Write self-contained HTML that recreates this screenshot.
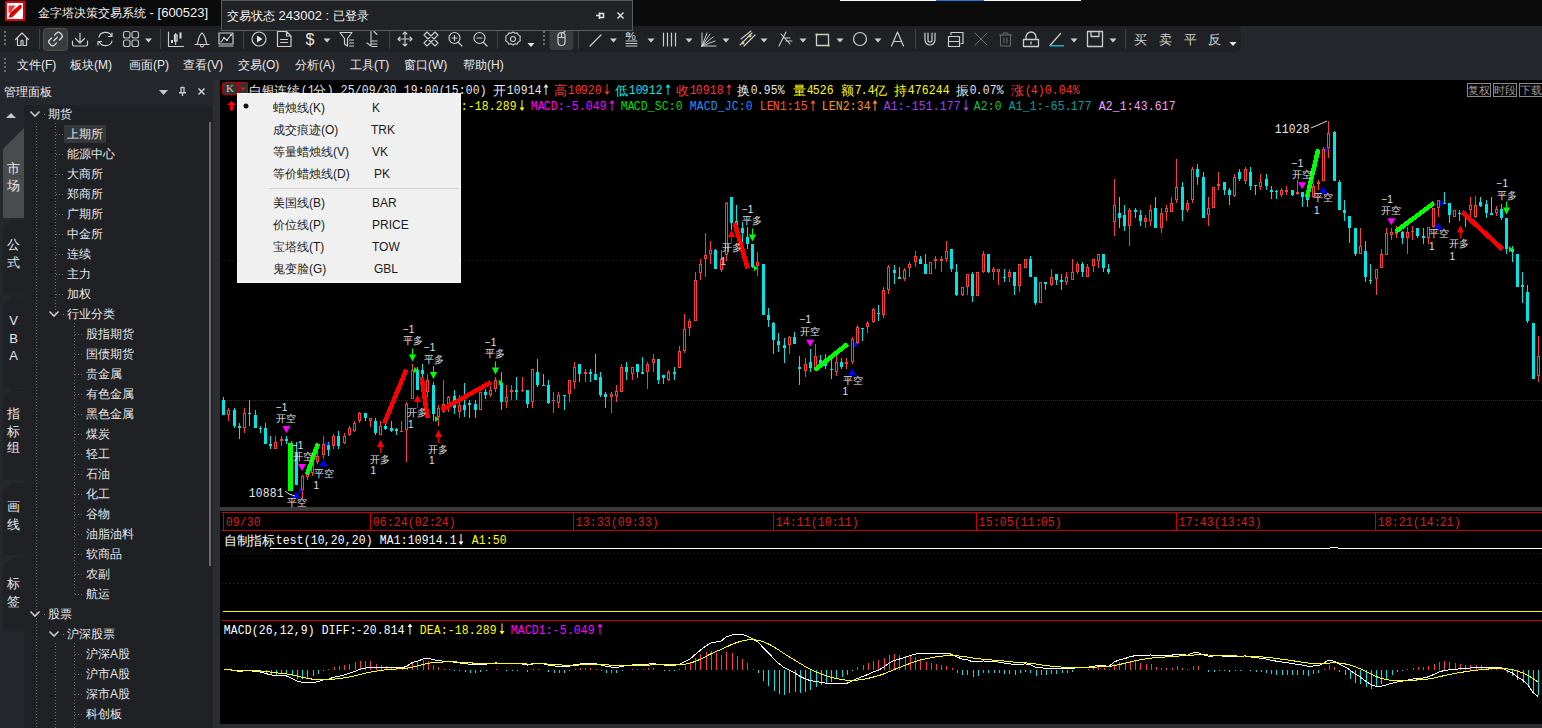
<!DOCTYPE html><html><head><meta charset="utf-8"><style>*{margin:0;padding:0;box-sizing:border-box}
html,body{width:1542px;height:728px;overflow:hidden;background:#24272b;font-family:"Liberation Sans",sans-serif;color:#e6e6e6;position:relative}
.abs{position:absolute}
#title{position:absolute;left:0;top:0;width:1542px;height:26px;background:#0b0b0c}
#ttext{position:absolute;left:38px;top:5px;font-size:12.35px;color:#f2f2f2;white-space:nowrap;letter-spacing:0px}
#status{position:absolute;left:221px;top:0;width:412px;height:31px;background:#212327;border:1px solid #5a5c60;border-top-color:#55575b}
#stext{position:absolute;left:5px;top:7px;font-size:12.35px;color:#f0f0f0;white-space:nowrap}
#toolbar{position:absolute;left:0;top:26px;width:1241px;height:25.5px;background:#1f2124;border-radius:0 0 5px 0}
#menubar{position:absolute;left:0;top:52px;width:1542px;height:28px;background:#24272b}
.mi{position:absolute;top:5px;font-size:12px;color:#e8e8e8;white-space:nowrap}
#left{position:absolute;left:0;top:80px;width:213px;height:648px;background:#24272b}
#ptitle{position:absolute;left:4px;top:3.5px;font-size:12px;color:#eaeaea}
#tabs{position:absolute;left:0;top:25px;width:24px;height:623px}
#tree{position:absolute;left:24px;top:25px;width:188px;height:623px;background:#1f2124;border-left:1px solid #303236}
.tn{position:absolute;font-size:12px;color:#e8e8e8;white-space:nowrap;line-height:16px}
.tab{position:absolute;left:6.5px;width:14px;font-size:13px;color:#e6e6e6;line-height:16px;text-align:center}
#chart{position:absolute;left:220px;top:80px;width:1322px;height:644px;background:#000}
.mt{position:absolute;left:0;height:0;white-space:nowrap}
.mt span{position:absolute;top:-6px;line-height:16px}
.mt .as{font-family:"Liberation Mono",monospace;font-size:13.5px;transform:scaleX(.84);transform-origin:4px 50%}
.mt .cj{font-size:13px}
.lb{position:absolute;white-space:nowrap;color:#e0e0e0;line-height:14px}
#popup{position:absolute;left:237px;top:93px;width:224px;height:190px;background:#f0f0f0;border:1px solid #f6f6f6}
.pm{position:absolute;left:35px;font-size:12px;color:#1a1a1a;white-space:nowrap;line-height:16px}
.ps{position:absolute;left:134px;font-size:12px;color:#1a1a1a;white-space:nowrap;line-height:16px}
</style></head><body><div id="title">
 <svg class="abs" style="left:0;top:0" width="30" height="26">
  <rect x="5" y="1" width="20" height="20" fill="#e60000"/>
  <rect x="7" y="3" width="16" height="16" fill="#ffffff"/>
  <path d="M8.5 5.5h7l-5 7h-2z" fill="#e84040"/>
  <path d="M8.5 17.5l2 -5 9 -7.5 2 0 0 3 -9.5 9.5z" fill="#e00000"/>
 </svg>
 <div id="ttext">金字塔决策交易系统<span style="font-size:13px"> - [600523]</span></div>
 <div class="abs" style="left:840px;top:0;width:241px;height:1px;background:#f4f4f4"></div>
 <div class="abs" style="left:936px;top:0;width:48px;height:1px;background:#1e7ad0"></div>
</div>
<div id="toolbar"></div>
<div id="menubar">
 <svg class="abs" style="left:0;top:0" width="12" height="28"><g fill="#6a6a6a"><rect x="4" y="6" width="2" height="2"/><rect x="4" y="10" width="2" height="2"/><rect x="4" y="14" width="2" height="2"/><rect x="4" y="18" width="2" height="2"/></g></svg>
 <div class="mi" style="left:17px">文件(F)</div>
 <div class="mi" style="left:70px">板块(M)</div>
 <div class="mi" style="left:129px">画面(P)</div>
 <div class="mi" style="left:183px">查看(V)</div>
 <div class="mi" style="left:238px">交易(O)</div>
 <div class="mi" style="left:295px">分析(A)</div>
 <div class="mi" style="left:350px">工具(T)</div>
 <div class="mi" style="left:404px">窗口(W)</div>
 <div class="mi" style="left:463px">帮助(H)</div>
</div>
<svg class="abs" style="left:0;top:0" width="1250" height="56"><rect x="4" y="31" width="2" height="2" fill="#6e6e6e"/><rect x="4" y="35" width="2" height="2" fill="#6e6e6e"/><rect x="4" y="39" width="2" height="2" fill="#6e6e6e"/><rect x="4" y="43" width="2" height="2" fill="#6e6e6e"/><path d="M15.5 39.5L22 33l6.5 6.5M17.5 38v7.5h3.5v-4.5a1 1 0 0 1 2 0v4.5h3.5V38" stroke="#cdcdcd" stroke-width="1.2" fill="none" stroke-linecap="round" stroke-linejoin="round"/><path d="M39.5 29V49" stroke="#3e4044" stroke-width="1"/><path d="M160.5 29V49" stroke="#3e4044" stroke-width="1"/><path d="M243.5 29V49" stroke="#3e4044" stroke-width="1"/><path d="M389.5 29V49" stroke="#3e4044" stroke-width="1"/><path d="M497.5 29V49" stroke="#3e4044" stroke-width="1"/><path d="M578.5 29V49" stroke="#3e4044" stroke-width="1"/><path d="M915.5 29V49" stroke="#3e4044" stroke-width="1"/><path d="M1125.5 29V49" stroke="#3e4044" stroke-width="1"/><rect x="43.5" y="28.5" width="24" height="22" rx="3" fill="#3b3c3e" stroke="#505154"/><g transform="rotate(-45 55.5 39)" stroke="#d6d6d6" stroke-width="1.3" fill="none" stroke-linecap="round"><path d="M57.5 35.5h3a2.5 2.5 0 0 1 2.5 2.5v2a2.5 2.5 0 0 1 -2.5 2.5h-3M53.5 35.5h-3a2.5 2.5 0 0 0 -2.5 2.5v2a2.5 2.5 0 0 0 2.5 2.5h3M53 39h5"/></g><path d="M80 33v10M75.5 38.5L80 43l4.5 -4.5M72.5 41v3.5a1.5 1.5 0 0 0 1.5 1.5h12a1.5 1.5 0 0 0 1.5 -1.5V41" stroke="#cdcdcd" stroke-width="1.2" fill="none" stroke-linecap="round" stroke-linejoin="round"/><path d="M99 37a6.5 5.5 0 0 1 12.5 -1M112 33v3.5h-3.5M112 41a6.5 5.5 0 0 1 -12.5 1M98 45v-3.5h3.5" stroke="#cdcdcd" stroke-width="1.2" fill="none" stroke-linecap="round" stroke-linejoin="round"/><rect x="123.5" y="31.5" width="6.5" height="6.5" rx="2" stroke="#bdbdbd" stroke-width="1.2" fill="none"/><rect x="132" y="31.5" width="6.5" height="6.5" rx="2" stroke="#bdbdbd" stroke-width="1.2" fill="none"/><rect x="123.5" y="40" width="6.5" height="6.5" rx="2" stroke="#bdbdbd" stroke-width="1.2" fill="none"/><rect x="132" y="40" width="6.5" height="6.5" rx="2" stroke="#bdbdbd" stroke-width="1.2" fill="none"/><path d="M145.0 38.5h7l-3.5 4z" fill="#cfcfcf"/><path d="M168.5 32v14.5h15" stroke="#cdcdcd" stroke-width="1.2" fill="none" stroke-linecap="round" stroke-linejoin="round"/><rect x="171" y="40" width="2" height="3" fill="#ddd"/><rect x="174.5" y="35" width="2.5" height="6" fill="none" stroke="#ddd" stroke-width="1.2"/><path d="M175.7 33v12" stroke="#ddd"/><rect x="179.5" y="32.5" width="2" height="6" fill="#ddd"/><path d="M195 44.5h14M197 44.5c1.5 -2 1 -9 5 -11.5c4 2.5 3.5 9.5 5 11.5M200.5 45.5a1.5 1.5 0 0 0 3 0" stroke="#cdcdcd" stroke-width="1.2" fill="none" stroke-linecap="round" stroke-linejoin="round"/><path d="M219 33h14v11h-14zM219 46h14M221 42l3 -4 3 2 4 -5" stroke="#cdcdcd" stroke-width="1.2" fill="none" stroke-linecap="round" stroke-linejoin="round"/><circle cx="224" cy="38" r="1" fill="#ddd"/><circle cx="227" cy="40" r="1" fill="#ddd"/><circle cx="231" cy="35" r="1" fill="#ddd"/><path d="M259 32a7 7 0 1 1 0 14a7 7 0 1 1 0 -14z" stroke="#cdcdcd" stroke-width="1.2" fill="none" stroke-linecap="round" stroke-linejoin="round"/><path d="M257 35.5v7l5.5 -3.5z" fill="#e6e6e6"/><path d="M277.5 31.5h9l4.5 4.5v10.5h-13.5zM286.5 31.5v4.5h4.5M280.5 39.5h7M280.5 42.5h7" stroke="#cdcdcd" stroke-width="1.2" fill="none" stroke-linecap="round" stroke-linejoin="round"/><text x="305.5" y="45" font-size="16" font-family="Liberation Sans" fill="#e6e6e6">$</text><path d="M323.5 38.5h7l-3.5 4z" fill="#cfcfcf"/><path d="M340 32.5h12l-4.5 6v7.5l-3 -2v-5.5zM349.5 40h4M349.5 43h4M349.5 46h4" stroke="#cdcdcd" stroke-width="1.2" fill="none" stroke-linecap="round" stroke-linejoin="round"/><path d="M371 31.5v14.5l-4 -3M374 31.5l3 3M372 41h5M372 44h5M372 46.5h5" stroke="#cdcdcd" stroke-width="1.1" fill="none" stroke-linecap="round" stroke-linejoin="round"/><path d="M405 32v14M398 39h14M403 34l2 -2 2 2M403 44l2 2 2 -2M400 37l-2 2 2 2M410 37l2 2 -2 2" stroke="#cdcdcd" stroke-width="1.1" fill="none" stroke-linecap="round" stroke-linejoin="round"/><path d="M424 35l3 -3 11 11 -3 3zM427 46l-3 -3 11 -11 3 3z" stroke="#cdcdcd" stroke-width="1.1" fill="none" stroke-linecap="round" stroke-linejoin="round"/><path d="M454.5 32.5a5.5 5.5 0 1 1 0 11a5.5 5.5 0 1 1 0 -11zM458.5 42.5l3.5 3.5M452 38h5M454.5 35.5v5" stroke="#cdcdcd" stroke-width="1.2" fill="none" stroke-linecap="round" stroke-linejoin="round"/><path d="M479.5 32.5a5.5 5.5 0 1 1 0 11a5.5 5.5 0 1 1 0 -11zM483.5 42.5l3.5 3.5M477 38h5" stroke="#cdcdcd" stroke-width="1.2" fill="none" stroke-linecap="round" stroke-linejoin="round"/><path d="M513 32l2 1.2 2.3 -0.3 1 2 2 1.3 -0.3 2.3 0.3 2.3 -2 1.3 -1 2 -2.3 -0.3 -2 1.2 -2 -1.2 -2.3 0.3 -1 -2 -2 -1.3 0.3 -2.3 -0.3 -2.3 2 -1.3 1 -2 2.3 0.3z" stroke="#cdcdcd" stroke-width="1.1" fill="none" stroke-linecap="round" stroke-linejoin="round"/><path d="M513 36.5a2.5 2.5 0 1 1 0 5a2.5 2.5 0 1 1 0 -5z" stroke="#cdcdcd" stroke-width="1.1" fill="none" stroke-linecap="round" stroke-linejoin="round"/><path d="M527.5 43h7l-3.5 4z" fill="#e6e6e6"/><rect x="543" y="31" width="2" height="2" fill="#6e6e6e"/><rect x="543" y="35" width="2" height="2" fill="#6e6e6e"/><rect x="543" y="39" width="2" height="2" fill="#6e6e6e"/><rect x="543" y="43" width="2" height="2" fill="#6e6e6e"/><rect x="549.5" y="27" width="24" height="23" rx="3" fill="#3b3c3e"/><path d="M558 36a3.5 3.5 0 0 1 7 0v6a3.5 3.5 0 0 1 -7 0zM558.5 37.5h6M561.5 33v4.5M563 32.5l2 -1" stroke="#cdcdcd" stroke-width="1.2" fill="none" stroke-linecap="round" stroke-linejoin="round"/><path d="M590 46l11 -11" stroke="#cdcdcd" stroke-width="1.2" fill="none" stroke-linecap="round" stroke-linejoin="round"/><path d="M610.0 38.5h7l-3.5 4z" fill="#cfcfcf"/><text x="626" y="40" font-size="11" font-family="Liberation Sans" fill="#d8d8d8">%</text><path d="M626 41h11M626 43.5h11M626 46h11M626 34h4M626 36.5h4" stroke="#cdcdcd" stroke-width="1" fill="none" stroke-linecap="round" stroke-linejoin="round"/><path d="M647.5 38.5h7l-3.5 4z" fill="#cfcfcf"/><path d="M663.5 33v13M667.5 33v13M671.5 33v13M675.5 33v13" stroke="#cdcdcd" stroke-width="1.2" fill="none" stroke-linecap="round" stroke-linejoin="round"/><path d="M685.5 38.5h7l-3.5 4z" fill="#cfcfcf"/><path d="M702 46h14M702 46l13 -5M702 46l11 -9M702 46l8 -12M702 46l5 -13M702 46v-13" stroke="#cdcdcd" stroke-width="1" fill="none" stroke-linecap="round" stroke-linejoin="round"/><path d="M722.5 38.5h7l-3.5 4z" fill="#cfcfcf"/><path d="M740 45l12 -12M744 46l11 -11M741 39l10 -8" stroke="#cdcdcd" stroke-width="1.1" fill="none" stroke-linecap="round" stroke-linejoin="round"/><circle cx="743" cy="43" r="1.4" fill="#d6d66a"/><circle cx="750" cy="36" r="1.4" fill="#d6d66a"/><path d="M760.5 38.5h7l-3.5 4z" fill="#cfcfcf"/><path d="M779 46l7 -14M781 34l9 10M784 38h6M786 41h6" stroke="#cdcdcd" stroke-width="1.1" fill="none" stroke-linecap="round" stroke-linejoin="round"/><path d="M799.5 38.5h7l-3.5 4z" fill="#cfcfcf"/><path d="M816.5 34.5h12v11h-12z" stroke="#cdcdcd" stroke-width="1.3" fill="none" stroke-linecap="round" stroke-linejoin="round"/><rect x="815.5" y="33.5" width="2" height="2" fill="#d6d66a"/><rect x="827.5" y="44.5" width="2" height="2" fill="#d6d66a"/><path d="M836.5 38.5h7l-3.5 4z" fill="#cfcfcf"/><path d="M860 32.5a6.5 6.5 0 1 1 0 13a6.5 6.5 0 1 1 0 -13z" stroke="#cdcdcd" stroke-width="1.2" fill="none" stroke-linecap="round" stroke-linejoin="round"/><path d="M874.5 38.5h7l-3.5 4z" fill="#cfcfcf"/><path d="M891.5 46l6 -14 6 14M893.5 41.5h8" stroke="#cdcdcd" stroke-width="1.2" fill="none" stroke-linecap="round" stroke-linejoin="round"/><path d="M925 33v7a5 5 0 0 0 10 0v-7M928 33v7a2 2 0 0 0 4 0v-7" stroke="#cdcdcd" stroke-width="1.2" fill="none" stroke-linecap="round" stroke-linejoin="round"/><path d="M951 34.5v-2h12v11h-2M948.5 36.5h11v10h-11zM948.5 41.5h11" stroke="#cdcdcd" stroke-width="1.2" fill="none" stroke-linecap="round" stroke-linejoin="round"/><path d="M975 33l12 12M987 33l-12 12" stroke="#707070" stroke-width="1" fill="none" stroke-linecap="round" stroke-linejoin="round"/><path d="M999 35h13M1003 35v-2h5v2M1000.5 35v11h10v-11M1004 38v5M1007 38v5" stroke="#6a6a6a" stroke-width="1" fill="none" stroke-linecap="round" stroke-linejoin="round"/><path d="M1023.5 39.5h15v7h-15zM1026 39.5v-2.5a5 5 0 0 1 10 0v2.5M1031 42v2" stroke="#cdcdcd" stroke-width="1.3" fill="none" stroke-linecap="round" stroke-linejoin="round"/><path d="M1050 45.5l10.5 -12" stroke="#cdcdcd" stroke-width="1.2" fill="none" stroke-linecap="round" stroke-linejoin="round"/><rect x="1050" y="45" width="14" height="1.5" fill="#1ab0c8"/><path d="M1070.5 38.5h7l-3.5 4z" fill="#cfcfcf"/><path d="M1087.5 31.5h15v15h-15zM1091 31.5v5h8v-5M1087.5 40.5" stroke="#cdcdcd" stroke-width="1.3" fill="none" stroke-linecap="round" stroke-linejoin="round"/><path d="M1109.5 38.5h7l-3.5 4z" fill="#cfcfcf"/></svg><div class="abs" style="left:1134px;top:31px;font-size:13px;color:#cfcfcf">买</div><div class="abs" style="left:1159px;top:31px;font-size:13px;color:#cfcfcf">卖</div><div class="abs" style="left:1184px;top:31px;font-size:13px;color:#cfcfcf">平</div><div class="abs" style="left:1208px;top:31px;font-size:13px;color:#cfcfcf">反</div><svg class="abs" style="left:1228px;top:40px" width="10" height="8"><path d="M1.5 2h7l-3.5 4z" fill="#e6e6e6"/></svg>
<div id="status"><div id="stext">交易状态<span style="font-size:13px"> 243002 : </span>已登录</div>
 <svg class="abs" style="left:370px;top:7px" width="40" height="16">
  <path d="M4 7.5h3.5M7.5 4.5v6.5" stroke="#e0e0e0" stroke-width="1.4" fill="none"/>
  <rect x="7.5" y="5.5" width="4" height="4" fill="none" stroke="#e0e0e0" stroke-width="1.5"/>
  <path d="M25.5 4.5l6 6M31.5 4.5l-6 6" stroke="#dcdcdc" stroke-width="1.5" fill="none"/>
 </svg>
</div>
<div id="left">
 <div id="ptitle">管理面板</div>
 <svg class="abs" style="left:150px;top:0" width="64" height="24">
  <path d="M9 10h9l-4.5 5z" fill="#c8c8c8"/>
  <path d="M31 7.5h3M31 7v5.5M34 7v5.5M29 12.75h7M32.5 12.5v3.5" stroke="#cfcfcf" stroke-width="1.3" fill="none"/>
  <path d="M48.5 8.5l6 6M54.5 8.5l-6 6" stroke="#d0d0d0" stroke-width="1.5" fill="none"/>
 </svg>
 <svg class="abs" style="left:0;top:0" width="213" height="648"><rect x="24" y="25" width="188" height="623" fill="#1f2124"/><path d="M6 38h10l-5 -5z" fill="#c8c8c8"/><path d="M3 148L11 140H24V215H6a3 3 0 0 1 -3 -3z" fill="#1f2124"/><path d="M3 225L11 217H24V308H6a3 3 0 0 1 -3 -3z" fill="#1f2124"/><path d="M3 317L11 309H24V400H6a3 3 0 0 1 -3 -3z" fill="#1f2124"/><path d="M3 411L11 403H24V475H6a3 3 0 0 1 -3 -3z" fill="#1f2124"/><path d="M3 486L11 478H24V551H6a3 3 0 0 1 -3 -3z" fill="#1f2124"/><path d="M3 69L24 48V138H3z" fill="#4a4b4d"/><path d="M36.5 43V648" stroke="#6a6a6a" stroke-width="1" stroke-dasharray="1 2"/><path d="M55.5 43V234" stroke="#6a6a6a" stroke-width="1" stroke-dasharray="1 2"/><path d="M74.5 243V514" stroke="#6a6a6a" stroke-width="1" stroke-dasharray="1 2"/><path d="M55.5 563V648" stroke="#6a6a6a" stroke-width="1" stroke-dasharray="1 2"/><path d="M74.5 563V648" stroke="#6a6a6a" stroke-width="1" stroke-dasharray="1 2"/><path d="M30.5 31.5l4.5 4.5l4.5 -4.5" stroke="#c8c8c8" stroke-width="1.6" fill="none"/><rect x="44" y="34" width="1" height="1" fill="#888"/><path d="M56 54.5H64" stroke="#6a6a6a" stroke-width="1" stroke-dasharray="1 2"/><rect x="64" y="45" width="42" height="18" fill="#35373a"/><path d="M56 74.5H64" stroke="#6a6a6a" stroke-width="1" stroke-dasharray="1 2"/><path d="M56 94.5H64" stroke="#6a6a6a" stroke-width="1" stroke-dasharray="1 2"/><path d="M56 114.5H64" stroke="#6a6a6a" stroke-width="1" stroke-dasharray="1 2"/><path d="M56 134.5H64" stroke="#6a6a6a" stroke-width="1" stroke-dasharray="1 2"/><path d="M56 154.5H64" stroke="#6a6a6a" stroke-width="1" stroke-dasharray="1 2"/><path d="M56 174.5H64" stroke="#6a6a6a" stroke-width="1" stroke-dasharray="1 2"/><path d="M56 194.5H64" stroke="#6a6a6a" stroke-width="1" stroke-dasharray="1 2"/><path d="M56 214.5H64" stroke="#6a6a6a" stroke-width="1" stroke-dasharray="1 2"/><path d="M49.5 231.5l4.5 4.5l4.5 -4.5" stroke="#c8c8c8" stroke-width="1.6" fill="none"/><rect x="63" y="234" width="1" height="1" fill="#888"/><path d="M75 254.5H83" stroke="#6a6a6a" stroke-width="1" stroke-dasharray="1 2"/><path d="M75 274.5H83" stroke="#6a6a6a" stroke-width="1" stroke-dasharray="1 2"/><path d="M75 294.5H83" stroke="#6a6a6a" stroke-width="1" stroke-dasharray="1 2"/><path d="M75 314.5H83" stroke="#6a6a6a" stroke-width="1" stroke-dasharray="1 2"/><path d="M75 334.5H83" stroke="#6a6a6a" stroke-width="1" stroke-dasharray="1 2"/><path d="M75 354.5H83" stroke="#6a6a6a" stroke-width="1" stroke-dasharray="1 2"/><path d="M75 374.5H83" stroke="#6a6a6a" stroke-width="1" stroke-dasharray="1 2"/><path d="M75 394.5H83" stroke="#6a6a6a" stroke-width="1" stroke-dasharray="1 2"/><path d="M75 414.5H83" stroke="#6a6a6a" stroke-width="1" stroke-dasharray="1 2"/><path d="M75 434.5H83" stroke="#6a6a6a" stroke-width="1" stroke-dasharray="1 2"/><path d="M75 454.5H83" stroke="#6a6a6a" stroke-width="1" stroke-dasharray="1 2"/><path d="M75 474.5H83" stroke="#6a6a6a" stroke-width="1" stroke-dasharray="1 2"/><path d="M75 494.5H83" stroke="#6a6a6a" stroke-width="1" stroke-dasharray="1 2"/><path d="M75 514.5H83" stroke="#6a6a6a" stroke-width="1" stroke-dasharray="1 2"/><path d="M30.5 531.5l4.5 4.5l4.5 -4.5" stroke="#c8c8c8" stroke-width="1.6" fill="none"/><rect x="44" y="534" width="1" height="1" fill="#888"/><path d="M49.5 551.5l4.5 4.5l4.5 -4.5" stroke="#c8c8c8" stroke-width="1.6" fill="none"/><rect x="63" y="554" width="1" height="1" fill="#888"/><path d="M75 574.5H83" stroke="#6a6a6a" stroke-width="1" stroke-dasharray="1 2"/><path d="M75 594.5H83" stroke="#6a6a6a" stroke-width="1" stroke-dasharray="1 2"/><path d="M75 614.5H83" stroke="#6a6a6a" stroke-width="1" stroke-dasharray="1 2"/><path d="M75 634.5H83" stroke="#6a6a6a" stroke-width="1" stroke-dasharray="1 2"/><rect x="209" y="42" width="2" height="444" fill="#68696b"/></svg><div class="tn" style="left:48px;top:26px">期货</div><div class="tn" style="left:67px;top:46px">上期所</div><div class="tn" style="left:67px;top:66px">能源中心</div><div class="tn" style="left:67px;top:86px">大商所</div><div class="tn" style="left:67px;top:106px">郑商所</div><div class="tn" style="left:67px;top:126px">广期所</div><div class="tn" style="left:67px;top:146px">中金所</div><div class="tn" style="left:67px;top:166px">连续</div><div class="tn" style="left:67px;top:186px">主力</div><div class="tn" style="left:67px;top:206px">加权</div><div class="tn" style="left:67px;top:226px">行业分类</div><div class="tn" style="left:86px;top:246px">股指期货</div><div class="tn" style="left:86px;top:266px">国债期货</div><div class="tn" style="left:86px;top:286px">贵金属</div><div class="tn" style="left:86px;top:306px">有色金属</div><div class="tn" style="left:86px;top:326px">黑色金属</div><div class="tn" style="left:86px;top:346px">煤炭</div><div class="tn" style="left:86px;top:366px">轻工</div><div class="tn" style="left:86px;top:386px">石油</div><div class="tn" style="left:86px;top:406px">化工</div><div class="tn" style="left:86px;top:426px">谷物</div><div class="tn" style="left:86px;top:446px">油脂油料</div><div class="tn" style="left:86px;top:466px">软商品</div><div class="tn" style="left:86px;top:486px">农副</div><div class="tn" style="left:86px;top:506px">航运</div><div class="tn" style="left:48px;top:526px">股票</div><div class="tn" style="left:67px;top:546px">沪深股票</div><div class="tn" style="left:86px;top:566px">沪深A股</div><div class="tn" style="left:86px;top:586px">沪市A股</div><div class="tn" style="left:86px;top:606px">深市A股</div><div class="tn" style="left:86px;top:626px">科创板</div><div class="tab" style="top:81px">市</div><div class="tab" style="top:98px">场</div><div class="tab" style="top:157px">公</div><div class="tab" style="top:175px">式</div><div class="tab" style="top:233px">V</div><div class="tab" style="top:251px">B</div><div class="tab" style="top:268px">A</div><div class="tab" style="top:326px">指</div><div class="tab" style="top:344px">标</div><div class="tab" style="top:360px">组</div><div class="tab" style="top:419px">画</div><div class="tab" style="top:436.5px">线</div><div class="tab" style="top:495.5px">标</div><div class="tab" style="top:513.5px">签</div>
</div>
<div class="abs" style="left:213px;top:80px;width:7px;height:648px;background:#2b2d31"></div>
<div id="chart"></div>
<div class="abs" style="left:220px;top:724px;width:1322px;height:4px;background:#2a2c30"></div>
<svg width="1542" height="728" style="position:absolute;left:0;top:0" shape-rendering="crispEdges"><path fill="#a00000" d="M221 260h1v1h-1zM225 260h1v1h-1zM229 260h1v1h-1zM233 260h1v1h-1zM237 260h1v1h-1zM241 260h1v1h-1zM245 260h1v1h-1zM249 260h1v1h-1zM253 260h1v1h-1zM257 260h1v1h-1zM261 260h1v1h-1zM265 260h1v1h-1zM269 260h1v1h-1zM273 260h1v1h-1zM277 260h1v1h-1zM281 260h1v1h-1zM285 260h1v1h-1zM289 260h1v1h-1zM293 260h1v1h-1zM297 260h1v1h-1zM301 260h1v1h-1zM305 260h1v1h-1zM309 260h1v1h-1zM313 260h1v1h-1zM317 260h1v1h-1zM321 260h1v1h-1zM325 260h1v1h-1zM329 260h1v1h-1zM333 260h1v1h-1zM337 260h1v1h-1zM341 260h1v1h-1zM345 260h1v1h-1zM349 260h1v1h-1zM353 260h1v1h-1zM357 260h1v1h-1zM361 260h1v1h-1zM365 260h1v1h-1zM369 260h1v1h-1zM373 260h1v1h-1zM377 260h1v1h-1zM381 260h1v1h-1zM385 260h1v1h-1zM389 260h1v1h-1zM393 260h1v1h-1zM397 260h1v1h-1zM401 260h1v1h-1zM405 260h1v1h-1zM409 260h1v1h-1zM413 260h1v1h-1zM417 260h1v1h-1zM421 260h1v1h-1zM425 260h1v1h-1zM429 260h1v1h-1zM433 260h1v1h-1zM437 260h1v1h-1zM441 260h1v1h-1zM445 260h1v1h-1zM449 260h1v1h-1zM453 260h1v1h-1zM457 260h1v1h-1zM461 260h1v1h-1zM465 260h1v1h-1zM469 260h1v1h-1zM473 260h1v1h-1zM477 260h1v1h-1zM481 260h1v1h-1zM485 260h1v1h-1zM489 260h1v1h-1zM493 260h1v1h-1zM497 260h1v1h-1zM501 260h1v1h-1zM505 260h1v1h-1zM509 260h1v1h-1zM513 260h1v1h-1zM517 260h1v1h-1zM521 260h1v1h-1zM525 260h1v1h-1zM529 260h1v1h-1zM533 260h1v1h-1zM537 260h1v1h-1zM541 260h1v1h-1zM545 260h1v1h-1zM549 260h1v1h-1zM553 260h1v1h-1zM557 260h1v1h-1zM561 260h1v1h-1zM565 260h1v1h-1zM569 260h1v1h-1zM573 260h1v1h-1zM577 260h1v1h-1zM581 260h1v1h-1zM585 260h1v1h-1zM589 260h1v1h-1zM593 260h1v1h-1zM597 260h1v1h-1zM601 260h1v1h-1zM605 260h1v1h-1zM609 260h1v1h-1zM613 260h1v1h-1zM617 260h1v1h-1zM621 260h1v1h-1zM625 260h1v1h-1zM629 260h1v1h-1zM633 260h1v1h-1zM637 260h1v1h-1zM641 260h1v1h-1zM645 260h1v1h-1zM649 260h1v1h-1zM653 260h1v1h-1zM657 260h1v1h-1zM661 260h1v1h-1zM665 260h1v1h-1zM669 260h1v1h-1zM673 260h1v1h-1zM677 260h1v1h-1zM681 260h1v1h-1zM685 260h1v1h-1zM689 260h1v1h-1zM693 260h1v1h-1zM697 260h1v1h-1zM701 260h1v1h-1zM705 260h1v1h-1zM709 260h1v1h-1zM713 260h1v1h-1zM717 260h1v1h-1zM721 260h1v1h-1zM725 260h1v1h-1zM729 260h1v1h-1zM733 260h1v1h-1zM737 260h1v1h-1zM741 260h1v1h-1zM745 260h1v1h-1zM749 260h1v1h-1zM753 260h1v1h-1zM757 260h1v1h-1zM761 260h1v1h-1zM765 260h1v1h-1zM769 260h1v1h-1zM773 260h1v1h-1zM777 260h1v1h-1zM781 260h1v1h-1zM785 260h1v1h-1zM789 260h1v1h-1zM793 260h1v1h-1zM797 260h1v1h-1zM801 260h1v1h-1zM805 260h1v1h-1zM809 260h1v1h-1zM813 260h1v1h-1zM817 260h1v1h-1zM821 260h1v1h-1zM825 260h1v1h-1zM829 260h1v1h-1zM833 260h1v1h-1zM837 260h1v1h-1zM841 260h1v1h-1zM845 260h1v1h-1zM849 260h1v1h-1zM853 260h1v1h-1zM857 260h1v1h-1zM861 260h1v1h-1zM865 260h1v1h-1zM869 260h1v1h-1zM873 260h1v1h-1zM877 260h1v1h-1zM881 260h1v1h-1zM885 260h1v1h-1zM889 260h1v1h-1zM893 260h1v1h-1zM897 260h1v1h-1zM901 260h1v1h-1zM905 260h1v1h-1zM909 260h1v1h-1zM913 260h1v1h-1zM917 260h1v1h-1zM921 260h1v1h-1zM925 260h1v1h-1zM929 260h1v1h-1zM933 260h1v1h-1zM937 260h1v1h-1zM941 260h1v1h-1zM945 260h1v1h-1zM949 260h1v1h-1zM953 260h1v1h-1zM957 260h1v1h-1zM961 260h1v1h-1zM965 260h1v1h-1zM969 260h1v1h-1zM973 260h1v1h-1zM977 260h1v1h-1zM981 260h1v1h-1zM985 260h1v1h-1zM989 260h1v1h-1zM993 260h1v1h-1zM997 260h1v1h-1zM1001 260h1v1h-1zM1005 260h1v1h-1zM1009 260h1v1h-1zM1013 260h1v1h-1zM1017 260h1v1h-1zM1021 260h1v1h-1zM1025 260h1v1h-1zM1029 260h1v1h-1zM1033 260h1v1h-1zM1037 260h1v1h-1zM1041 260h1v1h-1zM1045 260h1v1h-1zM1049 260h1v1h-1zM1053 260h1v1h-1zM1057 260h1v1h-1zM1061 260h1v1h-1zM1065 260h1v1h-1zM1069 260h1v1h-1zM1073 260h1v1h-1zM1077 260h1v1h-1zM1081 260h1v1h-1zM1085 260h1v1h-1zM1089 260h1v1h-1zM1093 260h1v1h-1zM1097 260h1v1h-1zM1101 260h1v1h-1zM1105 260h1v1h-1zM1109 260h1v1h-1zM1113 260h1v1h-1zM1117 260h1v1h-1zM1121 260h1v1h-1zM1125 260h1v1h-1zM1129 260h1v1h-1zM1133 260h1v1h-1zM1137 260h1v1h-1zM1141 260h1v1h-1zM1145 260h1v1h-1zM1149 260h1v1h-1zM1153 260h1v1h-1zM1157 260h1v1h-1zM1161 260h1v1h-1zM1165 260h1v1h-1zM1169 260h1v1h-1zM1173 260h1v1h-1zM1177 260h1v1h-1zM1181 260h1v1h-1zM1185 260h1v1h-1zM1189 260h1v1h-1zM1193 260h1v1h-1zM1197 260h1v1h-1zM1201 260h1v1h-1zM1205 260h1v1h-1zM1209 260h1v1h-1zM1213 260h1v1h-1zM1217 260h1v1h-1zM1221 260h1v1h-1zM1225 260h1v1h-1zM1229 260h1v1h-1zM1233 260h1v1h-1zM1237 260h1v1h-1zM1241 260h1v1h-1zM1245 260h1v1h-1zM1249 260h1v1h-1zM1253 260h1v1h-1zM1257 260h1v1h-1zM1261 260h1v1h-1zM1265 260h1v1h-1zM1269 260h1v1h-1zM1273 260h1v1h-1zM1277 260h1v1h-1zM1281 260h1v1h-1zM1285 260h1v1h-1zM1289 260h1v1h-1zM1293 260h1v1h-1zM1297 260h1v1h-1zM1301 260h1v1h-1zM1305 260h1v1h-1zM1309 260h1v1h-1zM1313 260h1v1h-1zM1317 260h1v1h-1zM1321 260h1v1h-1zM1325 260h1v1h-1zM1329 260h1v1h-1zM1333 260h1v1h-1zM1337 260h1v1h-1zM1341 260h1v1h-1zM1345 260h1v1h-1zM1349 260h1v1h-1zM1353 260h1v1h-1zM1357 260h1v1h-1zM1361 260h1v1h-1zM1365 260h1v1h-1zM1369 260h1v1h-1zM1373 260h1v1h-1zM1377 260h1v1h-1zM1381 260h1v1h-1zM1385 260h1v1h-1zM1389 260h1v1h-1zM1393 260h1v1h-1zM1397 260h1v1h-1zM1401 260h1v1h-1zM1405 260h1v1h-1zM1409 260h1v1h-1zM1413 260h1v1h-1zM1417 260h1v1h-1zM1421 260h1v1h-1zM1425 260h1v1h-1zM1429 260h1v1h-1zM1433 260h1v1h-1zM1437 260h1v1h-1zM1441 260h1v1h-1zM1445 260h1v1h-1zM1449 260h1v1h-1zM1453 260h1v1h-1zM1457 260h1v1h-1zM1461 260h1v1h-1zM1465 260h1v1h-1zM1469 260h1v1h-1zM1473 260h1v1h-1zM1477 260h1v1h-1zM1481 260h1v1h-1zM1485 260h1v1h-1zM1489 260h1v1h-1zM1493 260h1v1h-1zM1497 260h1v1h-1zM1501 260h1v1h-1zM1505 260h1v1h-1zM1509 260h1v1h-1zM1513 260h1v1h-1zM1517 260h1v1h-1zM1521 260h1v1h-1zM1525 260h1v1h-1zM1529 260h1v1h-1zM1533 260h1v1h-1zM1537 260h1v1h-1zM1541 260h1v1h-1z"/><path fill="#a00000" d="M221 400h1v1h-1zM223 400h1v1h-1zM225 400h1v1h-1zM227 400h1v1h-1zM229 400h1v1h-1zM231 400h1v1h-1zM233 400h1v1h-1zM235 400h1v1h-1zM237 400h1v1h-1zM239 400h1v1h-1zM241 400h1v1h-1zM243 400h1v1h-1zM245 400h1v1h-1zM247 400h1v1h-1zM249 400h1v1h-1zM251 400h1v1h-1zM253 400h1v1h-1zM255 400h1v1h-1zM257 400h1v1h-1zM259 400h1v1h-1zM261 400h1v1h-1zM263 400h1v1h-1zM265 400h1v1h-1zM267 400h1v1h-1zM269 400h1v1h-1zM271 400h1v1h-1zM273 400h1v1h-1zM275 400h1v1h-1zM277 400h1v1h-1zM279 400h1v1h-1zM281 400h1v1h-1zM283 400h1v1h-1zM285 400h1v1h-1zM287 400h1v1h-1zM289 400h1v1h-1zM291 400h1v1h-1zM293 400h1v1h-1zM295 400h1v1h-1zM297 400h1v1h-1zM299 400h1v1h-1zM301 400h1v1h-1zM303 400h1v1h-1zM305 400h1v1h-1zM307 400h1v1h-1zM309 400h1v1h-1zM311 400h1v1h-1zM313 400h1v1h-1zM315 400h1v1h-1zM317 400h1v1h-1zM319 400h1v1h-1zM321 400h1v1h-1zM323 400h1v1h-1zM325 400h1v1h-1zM327 400h1v1h-1zM329 400h1v1h-1zM331 400h1v1h-1zM333 400h1v1h-1zM335 400h1v1h-1zM337 400h1v1h-1zM339 400h1v1h-1zM341 400h1v1h-1zM343 400h1v1h-1zM345 400h1v1h-1zM347 400h1v1h-1zM349 400h1v1h-1zM351 400h1v1h-1zM353 400h1v1h-1zM355 400h1v1h-1zM357 400h1v1h-1zM359 400h1v1h-1zM361 400h1v1h-1zM363 400h1v1h-1zM365 400h1v1h-1zM367 400h1v1h-1zM369 400h1v1h-1zM371 400h1v1h-1zM373 400h1v1h-1zM375 400h1v1h-1zM377 400h1v1h-1zM379 400h1v1h-1zM381 400h1v1h-1zM383 400h1v1h-1zM385 400h1v1h-1zM387 400h1v1h-1zM389 400h1v1h-1zM391 400h1v1h-1zM393 400h1v1h-1zM395 400h1v1h-1zM397 400h1v1h-1zM399 400h1v1h-1zM401 400h1v1h-1zM403 400h1v1h-1zM405 400h1v1h-1zM407 400h1v1h-1zM409 400h1v1h-1zM411 400h1v1h-1zM413 400h1v1h-1zM415 400h1v1h-1zM417 400h1v1h-1zM419 400h1v1h-1zM421 400h1v1h-1zM423 400h1v1h-1zM425 400h1v1h-1zM427 400h1v1h-1zM429 400h1v1h-1zM431 400h1v1h-1zM433 400h1v1h-1zM435 400h1v1h-1zM437 400h1v1h-1zM439 400h1v1h-1zM441 400h1v1h-1zM443 400h1v1h-1zM445 400h1v1h-1zM447 400h1v1h-1zM449 400h1v1h-1zM451 400h1v1h-1zM453 400h1v1h-1zM455 400h1v1h-1zM457 400h1v1h-1zM459 400h1v1h-1zM461 400h1v1h-1zM463 400h1v1h-1zM465 400h1v1h-1zM467 400h1v1h-1zM469 400h1v1h-1zM471 400h1v1h-1zM473 400h1v1h-1zM475 400h1v1h-1zM477 400h1v1h-1zM479 400h1v1h-1zM481 400h1v1h-1zM483 400h1v1h-1zM485 400h1v1h-1zM487 400h1v1h-1zM489 400h1v1h-1zM491 400h1v1h-1zM493 400h1v1h-1zM495 400h1v1h-1zM497 400h1v1h-1zM499 400h1v1h-1zM501 400h1v1h-1zM503 400h1v1h-1zM505 400h1v1h-1zM507 400h1v1h-1zM509 400h1v1h-1zM511 400h1v1h-1zM513 400h1v1h-1zM515 400h1v1h-1zM517 400h1v1h-1zM519 400h1v1h-1zM521 400h1v1h-1zM523 400h1v1h-1zM525 400h1v1h-1zM527 400h1v1h-1zM529 400h1v1h-1zM531 400h1v1h-1zM533 400h1v1h-1zM535 400h1v1h-1zM537 400h1v1h-1zM539 400h1v1h-1zM541 400h1v1h-1zM543 400h1v1h-1zM545 400h1v1h-1zM547 400h1v1h-1zM549 400h1v1h-1zM551 400h1v1h-1zM553 400h1v1h-1zM555 400h1v1h-1zM557 400h1v1h-1zM559 400h1v1h-1zM561 400h1v1h-1zM563 400h1v1h-1zM565 400h1v1h-1zM567 400h1v1h-1zM569 400h1v1h-1zM571 400h1v1h-1zM573 400h1v1h-1zM575 400h1v1h-1zM577 400h1v1h-1zM579 400h1v1h-1zM581 400h1v1h-1zM583 400h1v1h-1zM585 400h1v1h-1zM587 400h1v1h-1zM589 400h1v1h-1zM591 400h1v1h-1zM593 400h1v1h-1zM595 400h1v1h-1zM597 400h1v1h-1zM599 400h1v1h-1zM601 400h1v1h-1zM603 400h1v1h-1zM605 400h1v1h-1zM607 400h1v1h-1zM609 400h1v1h-1zM611 400h1v1h-1zM613 400h1v1h-1zM615 400h1v1h-1zM617 400h1v1h-1zM619 400h1v1h-1zM621 400h1v1h-1zM623 400h1v1h-1zM625 400h1v1h-1zM627 400h1v1h-1zM629 400h1v1h-1zM631 400h1v1h-1zM633 400h1v1h-1zM635 400h1v1h-1zM637 400h1v1h-1zM639 400h1v1h-1zM641 400h1v1h-1zM643 400h1v1h-1zM645 400h1v1h-1zM647 400h1v1h-1zM649 400h1v1h-1zM651 400h1v1h-1zM653 400h1v1h-1zM655 400h1v1h-1zM657 400h1v1h-1zM659 400h1v1h-1zM661 400h1v1h-1zM663 400h1v1h-1zM665 400h1v1h-1zM667 400h1v1h-1zM669 400h1v1h-1zM671 400h1v1h-1zM673 400h1v1h-1zM675 400h1v1h-1zM677 400h1v1h-1zM679 400h1v1h-1zM681 400h1v1h-1zM683 400h1v1h-1zM685 400h1v1h-1zM687 400h1v1h-1zM689 400h1v1h-1zM691 400h1v1h-1zM693 400h1v1h-1zM695 400h1v1h-1zM697 400h1v1h-1zM699 400h1v1h-1zM701 400h1v1h-1zM703 400h1v1h-1zM705 400h1v1h-1zM707 400h1v1h-1zM709 400h1v1h-1zM711 400h1v1h-1zM713 400h1v1h-1zM715 400h1v1h-1zM717 400h1v1h-1zM719 400h1v1h-1zM721 400h1v1h-1zM723 400h1v1h-1zM725 400h1v1h-1zM727 400h1v1h-1zM729 400h1v1h-1zM731 400h1v1h-1zM733 400h1v1h-1zM735 400h1v1h-1zM737 400h1v1h-1zM739 400h1v1h-1zM741 400h1v1h-1zM743 400h1v1h-1zM745 400h1v1h-1zM747 400h1v1h-1zM749 400h1v1h-1zM751 400h1v1h-1zM753 400h1v1h-1zM755 400h1v1h-1zM757 400h1v1h-1zM759 400h1v1h-1zM761 400h1v1h-1zM763 400h1v1h-1zM765 400h1v1h-1zM767 400h1v1h-1zM769 400h1v1h-1zM771 400h1v1h-1zM773 400h1v1h-1zM775 400h1v1h-1zM777 400h1v1h-1zM779 400h1v1h-1zM781 400h1v1h-1zM783 400h1v1h-1zM785 400h1v1h-1zM787 400h1v1h-1zM789 400h1v1h-1zM791 400h1v1h-1zM793 400h1v1h-1zM795 400h1v1h-1zM797 400h1v1h-1zM799 400h1v1h-1zM801 400h1v1h-1zM803 400h1v1h-1zM805 400h1v1h-1zM807 400h1v1h-1zM809 400h1v1h-1zM811 400h1v1h-1zM813 400h1v1h-1zM815 400h1v1h-1zM817 400h1v1h-1zM819 400h1v1h-1zM821 400h1v1h-1zM823 400h1v1h-1zM825 400h1v1h-1zM827 400h1v1h-1zM829 400h1v1h-1zM831 400h1v1h-1zM833 400h1v1h-1zM835 400h1v1h-1zM837 400h1v1h-1zM839 400h1v1h-1zM841 400h1v1h-1zM843 400h1v1h-1zM845 400h1v1h-1zM847 400h1v1h-1zM849 400h1v1h-1zM851 400h1v1h-1zM853 400h1v1h-1zM855 400h1v1h-1zM857 400h1v1h-1zM859 400h1v1h-1zM861 400h1v1h-1zM863 400h1v1h-1zM865 400h1v1h-1zM867 400h1v1h-1zM869 400h1v1h-1zM871 400h1v1h-1zM873 400h1v1h-1zM875 400h1v1h-1zM877 400h1v1h-1zM879 400h1v1h-1zM881 400h1v1h-1zM883 400h1v1h-1zM885 400h1v1h-1zM887 400h1v1h-1zM889 400h1v1h-1zM891 400h1v1h-1zM893 400h1v1h-1zM895 400h1v1h-1zM897 400h1v1h-1zM899 400h1v1h-1zM901 400h1v1h-1zM903 400h1v1h-1zM905 400h1v1h-1zM907 400h1v1h-1zM909 400h1v1h-1zM911 400h1v1h-1zM913 400h1v1h-1zM915 400h1v1h-1zM917 400h1v1h-1zM919 400h1v1h-1zM921 400h1v1h-1zM923 400h1v1h-1zM925 400h1v1h-1zM927 400h1v1h-1zM929 400h1v1h-1zM931 400h1v1h-1zM933 400h1v1h-1zM935 400h1v1h-1zM937 400h1v1h-1zM939 400h1v1h-1zM941 400h1v1h-1zM943 400h1v1h-1zM945 400h1v1h-1zM947 400h1v1h-1zM949 400h1v1h-1zM951 400h1v1h-1zM953 400h1v1h-1zM955 400h1v1h-1zM957 400h1v1h-1zM959 400h1v1h-1zM961 400h1v1h-1zM963 400h1v1h-1zM965 400h1v1h-1zM967 400h1v1h-1zM969 400h1v1h-1zM971 400h1v1h-1zM973 400h1v1h-1zM975 400h1v1h-1zM977 400h1v1h-1zM979 400h1v1h-1zM981 400h1v1h-1zM983 400h1v1h-1zM985 400h1v1h-1zM987 400h1v1h-1zM989 400h1v1h-1zM991 400h1v1h-1zM993 400h1v1h-1zM995 400h1v1h-1zM997 400h1v1h-1zM999 400h1v1h-1zM1001 400h1v1h-1zM1003 400h1v1h-1zM1005 400h1v1h-1zM1007 400h1v1h-1zM1009 400h1v1h-1zM1011 400h1v1h-1zM1013 400h1v1h-1zM1015 400h1v1h-1zM1017 400h1v1h-1zM1019 400h1v1h-1zM1021 400h1v1h-1zM1023 400h1v1h-1zM1025 400h1v1h-1zM1027 400h1v1h-1zM1029 400h1v1h-1zM1031 400h1v1h-1zM1033 400h1v1h-1zM1035 400h1v1h-1zM1037 400h1v1h-1zM1039 400h1v1h-1zM1041 400h1v1h-1zM1043 400h1v1h-1zM1045 400h1v1h-1zM1047 400h1v1h-1zM1049 400h1v1h-1zM1051 400h1v1h-1zM1053 400h1v1h-1zM1055 400h1v1h-1zM1057 400h1v1h-1zM1059 400h1v1h-1zM1061 400h1v1h-1zM1063 400h1v1h-1zM1065 400h1v1h-1zM1067 400h1v1h-1zM1069 400h1v1h-1zM1071 400h1v1h-1zM1073 400h1v1h-1zM1075 400h1v1h-1zM1077 400h1v1h-1zM1079 400h1v1h-1zM1081 400h1v1h-1zM1083 400h1v1h-1zM1085 400h1v1h-1zM1087 400h1v1h-1zM1089 400h1v1h-1zM1091 400h1v1h-1zM1093 400h1v1h-1zM1095 400h1v1h-1zM1097 400h1v1h-1zM1099 400h1v1h-1zM1101 400h1v1h-1zM1103 400h1v1h-1zM1105 400h1v1h-1zM1107 400h1v1h-1zM1109 400h1v1h-1zM1111 400h1v1h-1zM1113 400h1v1h-1zM1115 400h1v1h-1zM1117 400h1v1h-1zM1119 400h1v1h-1zM1121 400h1v1h-1zM1123 400h1v1h-1zM1125 400h1v1h-1zM1127 400h1v1h-1zM1129 400h1v1h-1zM1131 400h1v1h-1zM1133 400h1v1h-1zM1135 400h1v1h-1zM1137 400h1v1h-1zM1139 400h1v1h-1zM1141 400h1v1h-1zM1143 400h1v1h-1zM1145 400h1v1h-1zM1147 400h1v1h-1zM1149 400h1v1h-1zM1151 400h1v1h-1zM1153 400h1v1h-1zM1155 400h1v1h-1zM1157 400h1v1h-1zM1159 400h1v1h-1zM1161 400h1v1h-1zM1163 400h1v1h-1zM1165 400h1v1h-1zM1167 400h1v1h-1zM1169 400h1v1h-1zM1171 400h1v1h-1zM1173 400h1v1h-1zM1175 400h1v1h-1zM1177 400h1v1h-1zM1179 400h1v1h-1zM1181 400h1v1h-1zM1183 400h1v1h-1zM1185 400h1v1h-1zM1187 400h1v1h-1zM1189 400h1v1h-1zM1191 400h1v1h-1zM1193 400h1v1h-1zM1195 400h1v1h-1zM1197 400h1v1h-1zM1199 400h1v1h-1zM1201 400h1v1h-1zM1203 400h1v1h-1zM1205 400h1v1h-1zM1207 400h1v1h-1zM1209 400h1v1h-1zM1211 400h1v1h-1zM1213 400h1v1h-1zM1215 400h1v1h-1zM1217 400h1v1h-1zM1219 400h1v1h-1zM1221 400h1v1h-1zM1223 400h1v1h-1zM1225 400h1v1h-1zM1227 400h1v1h-1zM1229 400h1v1h-1zM1231 400h1v1h-1zM1233 400h1v1h-1zM1235 400h1v1h-1zM1237 400h1v1h-1zM1239 400h1v1h-1zM1241 400h1v1h-1zM1243 400h1v1h-1zM1245 400h1v1h-1zM1247 400h1v1h-1zM1249 400h1v1h-1zM1251 400h1v1h-1zM1253 400h1v1h-1zM1255 400h1v1h-1zM1257 400h1v1h-1zM1259 400h1v1h-1zM1261 400h1v1h-1zM1263 400h1v1h-1zM1265 400h1v1h-1zM1267 400h1v1h-1zM1269 400h1v1h-1zM1271 400h1v1h-1zM1273 400h1v1h-1zM1275 400h1v1h-1zM1277 400h1v1h-1zM1279 400h1v1h-1zM1281 400h1v1h-1zM1283 400h1v1h-1zM1285 400h1v1h-1zM1287 400h1v1h-1zM1289 400h1v1h-1zM1291 400h1v1h-1zM1293 400h1v1h-1zM1295 400h1v1h-1zM1297 400h1v1h-1zM1299 400h1v1h-1zM1301 400h1v1h-1zM1303 400h1v1h-1zM1305 400h1v1h-1zM1307 400h1v1h-1zM1309 400h1v1h-1zM1311 400h1v1h-1zM1313 400h1v1h-1zM1315 400h1v1h-1zM1317 400h1v1h-1zM1319 400h1v1h-1zM1321 400h1v1h-1zM1323 400h1v1h-1zM1325 400h1v1h-1zM1327 400h1v1h-1zM1329 400h1v1h-1zM1331 400h1v1h-1zM1333 400h1v1h-1zM1335 400h1v1h-1zM1337 400h1v1h-1zM1339 400h1v1h-1zM1341 400h1v1h-1zM1343 400h1v1h-1zM1345 400h1v1h-1zM1347 400h1v1h-1zM1349 400h1v1h-1zM1351 400h1v1h-1zM1353 400h1v1h-1zM1355 400h1v1h-1zM1357 400h1v1h-1zM1359 400h1v1h-1zM1361 400h1v1h-1zM1363 400h1v1h-1zM1365 400h1v1h-1zM1367 400h1v1h-1zM1369 400h1v1h-1zM1371 400h1v1h-1zM1373 400h1v1h-1zM1375 400h1v1h-1zM1377 400h1v1h-1zM1379 400h1v1h-1zM1381 400h1v1h-1zM1383 400h1v1h-1zM1385 400h1v1h-1zM1387 400h1v1h-1zM1389 400h1v1h-1zM1391 400h1v1h-1zM1393 400h1v1h-1zM1395 400h1v1h-1zM1397 400h1v1h-1zM1399 400h1v1h-1zM1401 400h1v1h-1zM1403 400h1v1h-1zM1405 400h1v1h-1zM1407 400h1v1h-1zM1409 400h1v1h-1zM1411 400h1v1h-1zM1413 400h1v1h-1zM1415 400h1v1h-1zM1417 400h1v1h-1zM1419 400h1v1h-1zM1421 400h1v1h-1zM1423 400h1v1h-1zM1425 400h1v1h-1zM1427 400h1v1h-1zM1429 400h1v1h-1zM1431 400h1v1h-1zM1433 400h1v1h-1zM1435 400h1v1h-1zM1437 400h1v1h-1zM1439 400h1v1h-1zM1441 400h1v1h-1zM1443 400h1v1h-1zM1445 400h1v1h-1zM1447 400h1v1h-1zM1449 400h1v1h-1zM1451 400h1v1h-1zM1453 400h1v1h-1zM1455 400h1v1h-1zM1457 400h1v1h-1zM1459 400h1v1h-1zM1461 400h1v1h-1zM1463 400h1v1h-1zM1465 400h1v1h-1zM1467 400h1v1h-1zM1469 400h1v1h-1zM1471 400h1v1h-1zM1473 400h1v1h-1zM1475 400h1v1h-1zM1477 400h1v1h-1zM1479 400h1v1h-1zM1481 400h1v1h-1zM1483 400h1v1h-1zM1485 400h1v1h-1zM1487 400h1v1h-1zM1489 400h1v1h-1zM1491 400h1v1h-1zM1493 400h1v1h-1zM1495 400h1v1h-1zM1497 400h1v1h-1zM1499 400h1v1h-1zM1501 400h1v1h-1zM1503 400h1v1h-1zM1505 400h1v1h-1zM1507 400h1v1h-1zM1509 400h1v1h-1zM1511 400h1v1h-1zM1513 400h1v1h-1zM1515 400h1v1h-1zM1517 400h1v1h-1zM1519 400h1v1h-1zM1521 400h1v1h-1zM1523 400h1v1h-1zM1525 400h1v1h-1zM1527 400h1v1h-1zM1529 400h1v1h-1zM1531 400h1v1h-1zM1533 400h1v1h-1zM1535 400h1v1h-1zM1537 400h1v1h-1zM1539 400h1v1h-1zM1541 400h1v1h-1z"/><path fill="#00e6e6" d="M222 400h3v15h-3zM223 397h1v3h-1zM233 410h3v16h-3zM234 408h1v2h-1zM234 426h1v2h-1zM238 426h3v2h-3zM239 423h1v3h-1zM239 428h1v11h-1zM248 413h3v1h-3zM249 400h1v13h-1zM249 414h1v12h-1zM254 415h3v13h-3zM255 410h1v5h-1zM259 428h3v1h-3zM260 426h1v2h-1zM260 429h1v4h-1zM264 428h3v16h-3zM265 423h1v5h-1zM269 444h3v2h-3zM270 436h1v8h-1zM270 446h1v3h-1zM285 439h3v2h-3zM286 436h1v3h-1zM286 441h1v3h-1zM290 443h3v27h-3zM291 441h1v2h-1zM291 470h1v2h-1zM295 453h3v32h-3zM296 442h1v11h-1zM327 445h3v5h-3zM328 442h1v3h-1zM328 450h1v6h-1zM337 436h3v10h-3zM338 431h1v5h-1zM338 446h1v3h-1zM364 413h3v5h-3zM365 418h1v3h-1zM374 421h3v12h-3zM375 418h1v3h-1zM375 433h1v2h-1zM384 426h3v3h-3zM385 424h1v2h-1zM385 429h1v1h-1zM390 428h3v3h-3zM391 421h1v7h-1zM391 431h1v1h-1zM395 429h3v2h-3zM396 428h1v1h-1zM396 431h1v4h-1zM416 370h3v20h-3zM417 367h1v3h-1zM421 370h3v4h-3zM422 364h1v6h-1zM422 374h1v12h-1zM432 385h3v29h-3zM433 382h1v3h-1zM433 414h1v7h-1zM453 396h3v12h-3zM454 390h1v6h-1zM454 408h1v6h-1zM463 405h3v5h-3zM464 383h1v22h-1zM464 410h1v7h-1zM468 403h3v2h-3zM469 400h1v3h-1zM469 405h1v13h-1zM474 404h3v6h-3zM475 400h1v4h-1zM475 410h1v8h-1zM484 392h3v3h-3zM485 389h1v3h-1zM485 395h1v4h-1zM500 383h3v19h-3zM501 372h1v11h-1zM501 402h1v8h-1zM515 390h3v2h-3zM516 377h1v13h-1zM516 392h1v8h-1zM526 390h3v14h-3zM527 404h1v4h-1zM536 372h3v13h-3zM537 359h1v13h-1zM537 385h1v2h-1zM542 385h3v1h-3zM543 374h1v11h-1zM547 385h3v18h-3zM548 380h1v5h-1zM548 403h1v1h-1zM563 395h3v1h-3zM564 396h1v14h-1zM578 364h3v10h-3zM579 374h1v8h-1zM589 372h3v2h-3zM590 369h1v3h-1zM590 374h1v8h-1zM594 374h3v6h-3zM595 354h1v20h-1zM599 377h3v18h-3zM600 372h1v5h-1zM600 395h1v2h-1zM604 394h3v3h-3zM605 392h1v2h-1zM605 397h1v11h-1zM625 367h3v5h-3zM626 362h1v5h-1zM626 372h1v8h-1zM636 364h3v8h-3zM637 372h1v6h-1zM641 372h3v2h-3zM642 357h1v15h-1zM657 359h3v21h-3zM658 380h1v4h-1zM662 375h3v3h-3zM663 378h1v6h-1zM673 372h3v2h-3zM674 367h1v5h-1zM674 374h1v6h-1zM714 250h3v19h-3zM715 249h1v1h-1zM730 197h3v26h-3zM731 223h1v7h-1zM735 221h3v5h-3zM736 205h1v16h-1zM736 226h1v5h-1zM741 228h3v5h-3zM742 222h1v6h-1zM742 233h1v12h-1zM746 237h3v7h-3zM747 227h1v10h-1zM747 244h1v5h-1zM751 244h3v23h-3zM752 267h1v1h-1zM762 264h3v51h-3zM767 315h3v5h-3zM768 308h1v7h-1zM768 320h1v7h-1zM772 323h3v17h-3zM773 322h1v1h-1zM773 340h1v14h-1zM777 341h3v4h-3zM778 333h1v8h-1zM778 345h1v7h-1zM783 345h3v3h-3zM784 338h1v7h-1zM784 348h1v15h-1zM793 337h3v7h-3zM794 332h1v5h-1zM798 367h3v2h-3zM799 356h1v11h-1zM799 369h1v16h-1zM809 362h3v6h-3zM810 349h1v13h-1zM810 368h1v4h-1zM819 360h3v3h-3zM820 355h1v5h-1zM820 363h1v3h-1zM824 364h3v2h-3zM825 354h1v10h-1zM825 366h1v3h-1zM830 369h3v1h-3zM831 358h1v11h-1zM831 370h1v9h-1zM840 362h3v5h-3zM841 358h1v4h-1zM841 367h1v2h-1zM861 328h3v1h-3zM862 329h1v12h-1zM877 313h3v1h-3zM878 305h1v8h-1zM878 314h1v7h-1zM893 270h3v3h-3zM894 265h1v5h-1zM894 273h1v11h-1zM898 277h3v2h-3zM899 267h1v10h-1zM919 259h3v5h-3zM920 256h1v3h-1zM924 264h3v10h-3zM925 254h1v10h-1zM950 249h3v20h-3zM951 269h1v3h-1zM955 272h3v23h-3zM956 264h1v8h-1zM956 295h1v1h-1zM971 274h3v22h-3zM972 272h1v2h-1zM972 296h1v6h-1zM987 254h3v18h-3zM988 272h1v1h-1zM1003 277h3v1h-3zM1004 269h1v8h-1zM1004 278h1v4h-1zM1013 272h3v14h-3zM1014 286h1v9h-1zM1029 259h3v18h-3zM1030 256h1v3h-1zM1034 277h3v26h-3zM1035 303h1v2h-1zM1044 282h3v2h-3zM1045 284h1v6h-1zM1055 274h3v6h-3zM1056 280h1v5h-1zM1060 280h3v2h-3zM1061 274h1v6h-1zM1061 282h1v8h-1zM1081 264h3v8h-3zM1082 262h1v2h-1zM1082 272h1v5h-1zM1102 254h3v14h-3zM1103 268h1v4h-1zM1107 269h3v3h-3zM1108 264h1v5h-1zM1108 272h1v2h-1zM1118 213h3v5h-3zM1119 197h1v16h-1zM1119 218h1v10h-1zM1123 215h3v11h-3zM1124 205h1v10h-1zM1124 226h1v5h-1zM1134 210h3v2h-3zM1135 208h1v2h-1zM1135 212h1v6h-1zM1139 215h3v6h-3zM1140 210h1v5h-1zM1140 221h1v5h-1zM1154 208h3v20h-3zM1155 197h1v11h-1zM1181 187h3v23h-3zM1182 182h1v5h-1zM1182 210h1v11h-1zM1196 169h3v8h-3zM1197 164h1v5h-1zM1197 177h1v8h-1zM1202 177h3v41h-3zM1203 172h1v5h-1zM1223 182h3v8h-3zM1224 190h1v5h-1zM1228 190h3v5h-3zM1229 188h1v2h-1zM1229 195h1v10h-1zM1238 172h3v7h-3zM1239 169h1v3h-1zM1239 179h1v2h-1zM1249 172h3v14h-3zM1250 167h1v5h-1zM1250 186h1v4h-1zM1254 185h3v1h-3zM1255 186h1v9h-1zM1265 179h3v7h-3zM1266 174h1v5h-1zM1266 186h1v4h-1zM1270 190h3v2h-3zM1271 186h1v4h-1zM1271 192h1v7h-1zM1275 191h3v1h-3zM1276 190h1v1h-1zM1276 192h1v7h-1zM1291 190h3v5h-3zM1292 195h1v1h-1zM1301 192h3v5h-3zM1302 197h1v10h-1zM1306 196h3v4h-3zM1307 195h1v1h-1zM1307 200h1v7h-1zM1333 132h3v49h-3zM1334 131h1v1h-1zM1338 182h3v28h-3zM1339 180h1v2h-1zM1343 210h3v3h-3zM1344 200h1v10h-1zM1344 213h1v8h-1zM1348 216h3v12h-3zM1349 228h1v15h-1zM1354 228h3v26h-3zM1355 254h1v2h-1zM1364 251h3v26h-3zM1365 241h1v10h-1zM1365 277h1v5h-1zM1369 280h3v1h-3zM1370 264h1v16h-1zM1370 281h1v3h-1zM1401 232h3v6h-3zM1402 231h1v1h-1zM1402 238h1v6h-1zM1416 228h3v8h-3zM1417 236h1v2h-1zM1422 236h3v2h-3zM1423 228h1v8h-1zM1423 238h1v6h-1zM1443 203h3v1h-3zM1444 192h1v11h-1zM1448 203h3v12h-3zM1449 215h1v8h-1zM1458 213h3v1h-3zM1459 210h1v3h-1zM1459 214h1v7h-1zM1464 215h3v2h-3zM1465 214h1v1h-1zM1465 217h1v10h-1zM1479 202h3v4h-3zM1480 197h1v5h-1zM1480 206h1v1h-1zM1485 204h3v9h-3zM1486 200h1v4h-1zM1486 213h1v5h-1zM1490 213h3v2h-3zM1491 197h1v16h-1zM1500 209h3v9h-3zM1501 204h1v5h-1zM1501 218h1v2h-1zM1505 218h3v31h-3zM1506 249h1v5h-1zM1511 249h3v3h-3zM1512 246h1v3h-1zM1512 252h1v10h-1zM1516 254h3v33h-3zM1521 285h3v2h-3zM1522 272h1v13h-1zM1522 287h1v16h-1zM1526 292h3v29h-3zM1527 285h1v7h-1zM1527 321h1v2h-1zM1532 323h3v56h-3z"/><path fill="#ff3c3c" d="M227 410h3v1h-3zM227 414h3v1h-3zM227 410h1v5h-1zM229 410h1v5h-1zM228 408h1v2h-1zM228 415h1v6h-1zM243 413h3v1h-3zM243 427h3v1h-3zM243 413h1v15h-1zM245 413h1v15h-1zM244 408h1v5h-1zM244 428h1v5h-1zM274 442h3v1h-3zM274 448h3v1h-3zM274 442h1v7h-1zM276 442h1v7h-1zM275 436h1v6h-1zM280 439h3v2h-3zM281 436h1v3h-1zM281 441h1v5h-1zM301 476h3v1h-3zM301 489h3v1h-3zM301 476h1v14h-1zM303 476h1v14h-1zM302 475h1v1h-1zM302 490h1v8h-1zM306 472h3v1h-3zM306 476h3v1h-3zM306 472h1v5h-1zM308 472h1v5h-1zM307 470h1v2h-1zM307 477h1v3h-1zM311 463h3v1h-3zM311 472h3v1h-3zM311 463h1v10h-1zM313 463h1v10h-1zM312 460h1v3h-1zM312 473h1v3h-1zM316 456h3v1h-3zM316 461h3v1h-3zM316 456h1v6h-1zM318 456h1v6h-1zM317 451h1v5h-1zM317 462h1v2h-1zM322 444h3v1h-3zM322 454h3v1h-3zM322 444h1v11h-1zM324 444h1v11h-1zM323 436h1v8h-1zM323 455h1v4h-1zM332 436h3v1h-3zM332 445h3v1h-3zM332 436h1v10h-1zM334 436h1v10h-1zM333 434h1v2h-1zM333 446h1v3h-1zM343 436h3v1h-3zM343 442h3v1h-3zM343 436h1v7h-1zM345 436h1v7h-1zM344 433h1v3h-1zM344 443h1v1h-1zM348 428h3v1h-3zM348 434h3v1h-3zM348 428h1v7h-1zM350 428h1v7h-1zM349 426h1v2h-1zM349 435h1v1h-1zM353 423h3v1h-3zM353 430h3v1h-3zM353 423h1v8h-1zM355 423h1v8h-1zM354 421h1v2h-1zM354 431h1v1h-1zM358 413h3v1h-3zM358 420h3v1h-3zM358 413h1v8h-1zM360 413h1v8h-1zM359 412h1v1h-1zM359 421h1v2h-1zM369 418h3v1h-3zM369 420h3v1h-3zM369 418h1v3h-1zM371 418h1v3h-1zM370 421h1v6h-1zM379 426h3v1h-3zM379 434h3v1h-3zM379 426h1v9h-1zM381 426h1v9h-1zM380 421h1v5h-1zM400 431h3v1h-3zM401 421h1v10h-1zM405 404h3v1h-3zM405 429h3v1h-3zM405 404h1v26h-1zM407 404h1v26h-1zM406 402h1v2h-1zM406 430h1v32h-1zM411 370h3v1h-3zM411 398h3v1h-3zM411 370h1v29h-1zM413 370h1v29h-1zM412 364h1v6h-1zM426 380h3v1h-3zM426 391h3v1h-3zM426 380h1v12h-1zM428 380h1v12h-1zM427 374h1v6h-1zM427 392h1v5h-1zM437 408h3v1h-3zM437 416h3v1h-3zM437 408h1v9h-1zM439 408h1v9h-1zM438 405h1v3h-1zM438 417h1v9h-1zM442 404h3v1h-3zM442 411h3v1h-3zM442 404h1v8h-1zM444 404h1v8h-1zM443 380h1v24h-1zM443 412h1v1h-1zM447 397h3v1h-3zM447 404h3v1h-3zM447 397h1v8h-1zM449 397h1v8h-1zM448 396h1v1h-1zM448 405h1v7h-1zM458 405h3v1h-3zM458 411h3v1h-3zM458 405h1v7h-1zM460 405h1v7h-1zM459 395h1v10h-1zM459 412h1v6h-1zM479 392h3v1h-3zM479 409h3v1h-3zM479 392h1v18h-1zM481 392h1v18h-1zM489 390h3v1h-3zM489 394h3v1h-3zM489 390h1v5h-1zM491 390h1v5h-1zM490 386h1v4h-1zM490 395h1v2h-1zM494 380h3v1h-3zM494 388h3v1h-3zM494 380h1v9h-1zM496 380h1v9h-1zM495 377h1v3h-1zM495 389h1v3h-1zM505 397h3v1h-3zM505 401h3v1h-3zM505 397h1v5h-1zM507 397h1v5h-1zM506 385h1v12h-1zM506 402h1v6h-1zM510 390h3v2h-3zM511 385h1v5h-1zM511 392h1v8h-1zM521 390h3v1h-3zM522 377h1v13h-1zM522 391h1v1h-1zM531 369h3v1h-3zM531 401h3v1h-3zM531 369h1v33h-1zM533 369h1v33h-1zM532 402h1v6h-1zM552 400h3v1h-3zM553 392h1v8h-1zM553 401h1v12h-1zM557 395h3v1h-3zM557 402h3v1h-3zM557 395h1v8h-1zM559 395h1v8h-1zM558 392h1v3h-1zM558 403h1v5h-1zM568 380h3v1h-3zM568 393h3v1h-3zM568 380h1v14h-1zM570 380h1v14h-1zM569 394h1v8h-1zM573 367h3v1h-3zM573 381h3v1h-3zM573 367h1v15h-1zM575 367h1v15h-1zM574 362h1v5h-1zM574 382h1v7h-1zM584 372h3v2h-3zM585 369h1v3h-1zM585 374h1v8h-1zM610 394h3v1h-3zM610 396h3v1h-3zM610 394h1v3h-1zM612 394h1v3h-1zM611 392h1v2h-1zM611 397h1v16h-1zM615 391h3v1h-3zM615 395h3v1h-3zM615 391h1v5h-1zM617 391h1v5h-1zM616 385h1v6h-1zM616 396h1v6h-1zM620 367h3v1h-3zM620 391h3v1h-3zM620 367h1v25h-1zM622 367h1v25h-1zM621 364h1v3h-1zM631 367h3v1h-3zM631 373h3v1h-3zM631 367h1v7h-1zM633 367h1v7h-1zM632 374h1v6h-1zM646 364h3v1h-3zM646 371h3v1h-3zM646 364h1v8h-1zM648 364h1v8h-1zM647 362h1v2h-1zM647 372h1v17h-1zM652 359h3v1h-3zM652 362h3v1h-3zM652 359h1v4h-1zM654 359h1v4h-1zM653 354h1v5h-1zM653 363h1v9h-1zM667 372h3v1h-3zM667 379h3v1h-3zM667 372h1v8h-1zM669 372h1v8h-1zM668 370h1v2h-1zM668 380h1v1h-1zM678 351h3v1h-3zM678 367h3v1h-3zM678 351h1v17h-1zM680 351h1v17h-1zM679 346h1v5h-1zM683 329h3v1h-3zM683 350h3v1h-3zM683 329h1v22h-1zM685 329h1v22h-1zM684 314h1v15h-1zM684 351h1v2h-1zM688 321h3v1h-3zM688 327h3v1h-3zM688 321h1v7h-1zM690 321h1v7h-1zM689 319h1v2h-1zM689 328h1v8h-1zM694 280h3v1h-3zM694 320h3v1h-3zM694 280h1v41h-1zM696 280h1v41h-1zM695 272h1v8h-1zM699 264h3v1h-3zM699 272h3v1h-3zM699 264h1v9h-1zM701 264h1v9h-1zM700 259h1v5h-1zM700 273h1v7h-1zM704 255h3v1h-3zM704 258h3v1h-3zM704 255h1v4h-1zM706 255h1v4h-1zM705 233h1v22h-1zM705 259h1v18h-1zM709 250h3v1h-3zM709 253h3v1h-3zM709 250h1v4h-1zM711 250h1v4h-1zM710 241h1v9h-1zM710 254h1v10h-1zM720 259h3v1h-3zM720 269h3v1h-3zM720 259h1v11h-1zM722 259h1v11h-1zM721 250h1v9h-1zM721 270h1v2h-1zM725 203h3v1h-3zM725 254h3v1h-3zM725 203h1v52h-1zM727 203h1v52h-1zM726 202h1v1h-1zM726 255h1v6h-1zM756 262h3v1h-3zM756 265h3v1h-3zM756 262h1v4h-1zM758 262h1v4h-1zM757 252h1v10h-1zM757 266h1v10h-1zM788 337h3v1h-3zM788 344h3v1h-3zM788 337h1v8h-1zM790 337h1v8h-1zM789 336h1v1h-1zM789 345h1v9h-1zM804 364h3v1h-3zM804 370h3v1h-3zM804 364h1v7h-1zM806 364h1v7h-1zM805 358h1v6h-1zM805 371h1v6h-1zM814 356h3v1h-3zM814 367h3v1h-3zM814 356h1v12h-1zM816 356h1v12h-1zM815 344h1v12h-1zM815 368h1v2h-1zM835 362h3v1h-3zM835 371h3v1h-3zM835 362h1v10h-1zM837 362h1v10h-1zM836 356h1v6h-1zM836 372h1v4h-1zM845 362h3v2h-3zM846 358h1v4h-1zM846 364h1v5h-1zM851 339h3v1h-3zM851 361h3v1h-3zM851 339h1v23h-1zM853 339h1v23h-1zM852 337h1v2h-1zM852 362h1v2h-1zM856 327h3v1h-3zM856 342h3v1h-3zM856 327h1v16h-1zM858 327h1v16h-1zM857 325h1v2h-1zM857 343h1v1h-1zM866 323h3v1h-3zM866 326h3v1h-3zM866 323h1v4h-1zM868 323h1v4h-1zM867 321h1v2h-1zM867 327h1v6h-1zM872 309h3v1h-3zM872 321h3v1h-3zM872 309h1v13h-1zM874 309h1v13h-1zM873 308h1v1h-1zM873 322h1v1h-1zM882 290h3v1h-3zM882 314h3v1h-3zM882 290h1v25h-1zM884 290h1v25h-1zM883 287h1v3h-1zM883 315h1v3h-1zM887 267h3v1h-3zM887 289h3v1h-3zM887 267h1v23h-1zM889 267h1v23h-1zM888 265h1v2h-1zM888 290h1v4h-1zM903 270h3v1h-3zM903 278h3v1h-3zM903 270h1v9h-1zM905 270h1v9h-1zM904 268h1v2h-1zM904 279h1v2h-1zM908 264h3v1h-3zM908 267h3v1h-3zM908 264h1v4h-1zM910 264h1v4h-1zM909 262h1v2h-1zM909 268h1v9h-1zM914 256h3v1h-3zM914 261h3v1h-3zM914 256h1v6h-1zM916 256h1v6h-1zM915 251h1v5h-1zM915 262h1v5h-1zM929 262h3v1h-3zM929 273h3v1h-3zM929 262h1v12h-1zM931 262h1v12h-1zM934 259h3v2h-3zM935 256h1v3h-1zM935 261h1v8h-1zM940 259h3v2h-3zM941 256h1v3h-1zM941 261h1v11h-1zM945 251h3v1h-3zM945 258h3v1h-3zM945 251h1v8h-1zM947 251h1v8h-1zM946 241h1v10h-1zM946 259h1v3h-1zM961 287h3v1h-3zM961 294h3v1h-3zM961 287h1v8h-1zM963 287h1v8h-1zM962 295h1v1h-1zM966 274h3v1h-3zM966 286h3v1h-3zM966 274h1v13h-1zM968 274h1v13h-1zM967 287h1v8h-1zM976 272h3v1h-3zM976 295h3v1h-3zM976 272h1v24h-1zM978 272h1v24h-1zM982 254h3v1h-3zM982 271h3v1h-3zM982 254h1v18h-1zM984 254h1v18h-1zM983 251h1v3h-1zM983 272h1v1h-1zM992 269h3v1h-3zM992 271h3v1h-3zM992 269h1v3h-1zM994 269h1v3h-1zM993 267h1v2h-1zM993 272h1v8h-1zM997 269h3v1h-3zM997 271h3v1h-3zM997 269h1v3h-1zM999 269h1v3h-1zM998 272h1v13h-1zM1008 272h3v1h-3zM1008 276h3v1h-3zM1008 272h1v5h-1zM1010 272h1v5h-1zM1009 269h1v3h-1zM1009 277h1v5h-1zM1018 264h3v1h-3zM1018 285h3v1h-3zM1018 264h1v22h-1zM1020 264h1v22h-1zM1019 286h1v6h-1zM1024 259h3v1h-3zM1024 267h3v1h-3zM1024 259h1v9h-1zM1026 259h1v9h-1zM1039 282h3v1h-3zM1039 302h3v1h-3zM1039 282h1v21h-1zM1041 282h1v21h-1zM1050 277h3v1h-3zM1050 284h3v1h-3zM1050 277h1v8h-1zM1052 277h1v8h-1zM1051 269h1v8h-1zM1051 285h1v1h-1zM1065 277h3v1h-3zM1065 281h3v1h-3zM1065 277h1v5h-1zM1067 277h1v5h-1zM1066 272h1v5h-1zM1066 282h1v3h-1zM1071 272h3v1h-3zM1071 279h3v1h-3zM1071 272h1v8h-1zM1073 272h1v8h-1zM1072 259h1v13h-1zM1076 264h3v1h-3zM1076 271h3v1h-3zM1076 264h1v8h-1zM1078 264h1v8h-1zM1077 262h1v2h-1zM1077 272h1v2h-1zM1086 267h3v1h-3zM1086 276h3v1h-3zM1086 267h1v10h-1zM1088 267h1v10h-1zM1087 264h1v3h-1zM1092 259h3v1h-3zM1092 265h3v1h-3zM1092 259h1v7h-1zM1094 259h1v7h-1zM1093 266h1v6h-1zM1097 254h3v1h-3zM1097 260h3v1h-3zM1097 254h1v7h-1zM1099 254h1v7h-1zM1098 261h1v7h-1zM1113 205h3v1h-3zM1113 221h3v1h-3zM1113 205h1v17h-1zM1115 205h1v17h-1zM1114 179h1v26h-1zM1114 222h1v14h-1zM1128 210h3v1h-3zM1128 225h3v1h-3zM1128 210h1v16h-1zM1130 210h1v16h-1zM1129 208h1v2h-1zM1129 226h1v20h-1zM1144 218h3v1h-3zM1144 221h3v1h-3zM1144 218h1v4h-1zM1146 218h1v4h-1zM1145 215h1v3h-1zM1145 222h1v6h-1zM1149 210h3v1h-3zM1149 220h3v1h-3zM1149 210h1v11h-1zM1151 210h1v11h-1zM1150 205h1v5h-1zM1150 221h1v5h-1zM1160 213h3v1h-3zM1160 227h3v1h-3zM1160 213h1v15h-1zM1162 213h1v15h-1zM1161 208h1v5h-1zM1161 228h1v5h-1zM1165 208h3v1h-3zM1165 211h3v1h-3zM1165 208h1v4h-1zM1167 208h1v4h-1zM1166 205h1v3h-1zM1166 212h1v9h-1zM1170 203h3v1h-3zM1170 211h3v1h-3zM1170 203h1v9h-1zM1172 203h1v9h-1zM1171 197h1v6h-1zM1175 187h3v1h-3zM1175 199h3v1h-3zM1175 187h1v13h-1zM1177 187h1v13h-1zM1176 159h1v28h-1zM1176 200h1v3h-1zM1186 203h3v1h-3zM1186 209h3v1h-3zM1186 203h1v7h-1zM1188 203h1v7h-1zM1187 200h1v3h-1zM1187 210h1v2h-1zM1191 169h3v1h-3zM1191 199h3v1h-3zM1191 169h1v31h-1zM1193 169h1v31h-1zM1192 167h1v2h-1zM1192 200h1v3h-1zM1207 208h3v1h-3zM1207 214h3v1h-3zM1207 208h1v7h-1zM1209 208h1v7h-1zM1208 197h1v11h-1zM1208 215h1v11h-1zM1212 187h3v1h-3zM1212 207h3v1h-3zM1212 187h1v21h-1zM1214 187h1v21h-1zM1217 184h3v2h-3zM1218 172h1v12h-1zM1218 186h1v4h-1zM1233 177h3v1h-3zM1233 195h3v1h-3zM1233 177h1v19h-1zM1235 177h1v19h-1zM1234 174h1v3h-1zM1234 196h1v1h-1zM1244 169h3v1h-3zM1244 180h3v1h-3zM1244 169h1v12h-1zM1246 169h1v12h-1zM1245 167h1v2h-1zM1245 181h1v3h-1zM1259 182h3v1h-3zM1259 186h3v1h-3zM1259 182h1v5h-1zM1261 182h1v5h-1zM1260 174h1v8h-1zM1260 187h1v3h-1zM1280 190h3v1h-3zM1280 194h3v1h-3zM1280 190h1v5h-1zM1282 190h1v5h-1zM1281 188h1v2h-1zM1281 195h1v2h-1zM1285 190h3v2h-3zM1286 186h1v4h-1zM1286 192h1v3h-1zM1296 192h3v2h-3zM1297 180h1v12h-1zM1297 194h1v1h-1zM1312 186h3v1h-3zM1312 196h3v1h-3zM1312 186h1v11h-1zM1314 186h1v11h-1zM1313 184h1v2h-1zM1317 182h3v2h-3zM1318 180h1v2h-1zM1318 184h1v6h-1zM1322 149h3v1h-3zM1322 180h3v1h-3zM1322 149h1v32h-1zM1324 149h1v32h-1zM1323 147h1v2h-1zM1327 133h3v1h-3zM1327 147h3v1h-3zM1327 133h1v15h-1zM1329 133h1v15h-1zM1328 121h1v12h-1zM1328 148h1v10h-1zM1359 246h3v1h-3zM1359 253h3v1h-3zM1359 246h1v8h-1zM1361 246h1v8h-1zM1360 228h1v18h-1zM1375 269h3v1h-3zM1375 278h3v1h-3zM1375 269h1v10h-1zM1377 269h1v10h-1zM1376 279h1v16h-1zM1380 254h3v1h-3zM1380 267h3v1h-3zM1380 254h1v14h-1zM1382 254h1v14h-1zM1381 249h1v5h-1zM1385 233h3v1h-3zM1385 254h3v1h-3zM1385 233h1v22h-1zM1387 233h1v22h-1zM1386 228h1v5h-1zM1390 232h3v1h-3zM1390 234h3v1h-3zM1390 232h1v3h-1zM1392 232h1v3h-1zM1391 228h1v4h-1zM1391 235h1v5h-1zM1395 230h3v1h-3zM1395 233h3v1h-3zM1395 230h1v4h-1zM1397 230h1v4h-1zM1396 226h1v4h-1zM1396 234h1v4h-1zM1406 232h3v1h-3zM1406 237h3v1h-3zM1406 232h1v6h-1zM1408 232h1v6h-1zM1407 227h1v5h-1zM1407 238h1v16h-1zM1411 231h3v1h-3zM1412 226h1v5h-1zM1412 232h1v8h-1zM1427 227h3v1h-3zM1427 237h3v1h-3zM1427 227h1v11h-1zM1429 227h1v11h-1zM1428 238h1v6h-1zM1432 208h3v1h-3zM1432 226h3v1h-3zM1432 208h1v19h-1zM1434 208h1v19h-1zM1433 227h1v1h-1zM1437 200h3v1h-3zM1437 207h3v1h-3zM1437 200h1v8h-1zM1439 200h1v8h-1zM1438 208h1v9h-1zM1453 210h3v1h-3zM1453 216h3v1h-3zM1453 210h1v7h-1zM1455 210h1v7h-1zM1469 205h3v1h-3zM1469 209h3v1h-3zM1469 205h1v5h-1zM1471 205h1v5h-1zM1470 197h1v8h-1zM1470 210h1v8h-1zM1474 205h3v1h-3zM1474 216h3v1h-3zM1474 205h1v12h-1zM1476 205h1v12h-1zM1475 196h1v9h-1zM1475 217h1v1h-1zM1495 209h3v1h-3zM1495 212h3v1h-3zM1495 209h1v4h-1zM1497 209h1v4h-1zM1496 206h1v3h-1zM1496 213h1v3h-1zM1537 356h3v1h-3zM1537 375h3v1h-3zM1537 356h1v20h-1zM1539 356h1v20h-1zM1538 336h1v20h-1zM1538 376h1v6h-1z"/></svg><svg width="1542" height="728" style="position:absolute;left:0;top:0"><line x1="290.5" y1="443" x2="290.5" y2="491" stroke="#00ff00" stroke-width="4.5" stroke-linecap="butt" shape-rendering="crispEdges"/><line x1="307" y1="474.6" x2="318" y2="443.4" stroke="#00ff00" stroke-width="4.5" stroke-linecap="butt" shape-rendering="crispEdges"/><line x1="384.3" y1="423.3" x2="406.3" y2="369.5" stroke="#ff0000" stroke-width="4.5" stroke-linecap="butt" shape-rendering="crispEdges"/><line x1="421.6" y1="377" x2="427.6" y2="417.8" stroke="#ff0000" stroke-width="4.5" stroke-linecap="butt" shape-rendering="crispEdges"/><line x1="441.4" y1="410" x2="490.9" y2="382.3" stroke="#ff0000" stroke-width="4.5" stroke-linecap="butt" shape-rendering="crispEdges"/><line x1="734.7" y1="223" x2="747.6" y2="268.3" stroke="#ff0000" stroke-width="4.5" stroke-linecap="butt" shape-rendering="crispEdges"/><line x1="814.8" y1="370" x2="847.5" y2="344" stroke="#00ff00" stroke-width="4.5" stroke-linecap="butt" shape-rendering="crispEdges"/><line x1="1307" y1="197.5" x2="1318.2" y2="149.3" stroke="#00ff00" stroke-width="4.5" stroke-linecap="butt" shape-rendering="crispEdges"/><line x1="1395.7" y1="231.6" x2="1434.1" y2="203" stroke="#00ff00" stroke-width="4.5" stroke-linecap="butt" shape-rendering="crispEdges"/><line x1="1462.1" y1="212" x2="1502.4" y2="249.2" stroke="#ff0000" stroke-width="4.5" stroke-linecap="butt" shape-rendering="crispEdges"/><path fill="#ff00ff" d="M282.4 426h8l-4 7z"/><path fill="#ff00ff" d="M298.0 464h8l-4 7z"/><path fill="#ff00ff" d="M806.2 339.7h8l-4 7z"/><path fill="#ff00ff" d="M1298.1 182.3h8l-4 7z"/><path fill="#ff00ff" d="M1387.3 218.2h8l-4 7z"/><path fill="#0000ff" d="M292.2 498h8l-4 -7z"/><path fill="#0000ff" d="M319.4 466.5h8l-4 -7z"/><path fill="#0000ff" d="M848.2 375.5h8l-4 -7z"/><path fill="#0000ff" d="M1319.4 193.5h8l-4 -7z"/><path fill="#0000ff" d="M1434.2 229.5h8l-4 -7z"/><path fill="#ff0000" d="M380.5 440l3.6 7h-3.1v6h-1v-6h-3.1z"/><path fill="#ff0000" d="M417.5 395l3.6 7h-3.1v6h-1v-6h-3.1z"/><path fill="#ff0000" d="M438.5 430l3.6 7h-3.1v6h-1v-6h-3.1z"/><path fill="#ff0000" d="M731.5 230l3.6 7h-3.1v6h-1v-6h-3.1z"/><path fill="#ff0000" d="M1460.5 225.5l3.6 7h-3.1v6h-1v-6h-3.1z"/><path fill="#00ff00" d="M412 348.6h1v6h3.1l-3.6 7l-3.6 -7h3.1z"/><path fill="#00ff00" d="M433 366h1v6h3.1l-3.6 7l-3.6 -7h3.1z"/><path fill="#00ff00" d="M495 361.4h1v6h3.1l-3.6 7l-3.6 -7h3.1z"/><path fill="#00ff00" d="M752 228.5h1v6h3.1l-3.6 7l-3.6 -7h3.1z"/><path fill="#00ff00" d="M1506 201.6h1v6h3.1l-3.6 7l-3.6 -7h3.1z"/><path fill="#00ff00" d="M414.0 367.0l4 3l-4 3z"/><path fill="#00ff00" d="M435.0 416.0l4 3l-4 3z"/><path fill="#00ff00" d="M498.7 379.6l4 3l-4 3z"/><path fill="#00ff00" d="M753.8 265.3l4 3l-4 3z"/><path fill="#00ff00" d="M1509.0 246.2l4 3l-4 3z"/><path fill="#0000ff" d="M299.0 488.0l4 3l-4 3z"/><path fill="#0000ff" d="M325.0 441.0l4 3l-4 3z"/><path fill="#0000ff" d="M854.0 341.4l4 3l-4 3z"/><path fill="#0000ff" d="M1325.0 146.3l4 3l-4 3z"/><path fill="#0000ff" d="M1440.0 200.0l4 3l-4 3z"/><polyline fill="none" stroke="#ddd" stroke-width="1" points="285,491 289,494 295,496"/><polyline fill="none" stroke="#ddd" stroke-width="1" points="1311,128 1318,125 1327,121"/></svg><svg width="1542" height="728" style="position:absolute;left:0;top:0" shape-rendering="crispEdges"><rect x="220" y="507" width="1322" height="4" fill="#3a3a3a"/><rect x="221" y="512" width="1321" height="1" fill="#c80000"/><rect x="221" y="530" width="1321" height="1" fill="#c80000"/><rect x="223" y="512" width="1" height="18" fill="#c80000"/><rect x="370" y="512" width="1" height="18" fill="#c80000"/><rect x="573" y="512" width="1" height="18" fill="#c80000"/><rect x="773" y="512" width="1" height="18" fill="#c80000"/><rect x="976" y="512" width="1" height="18" fill="#c80000"/><rect x="1176" y="512" width="1" height="18" fill="#c80000"/><rect x="1375" y="512" width="1" height="18" fill="#c80000"/><rect x="270" y="548" width="1272" height="1" fill="#ffffff"/><rect x="1330" y="547" width="8" height="1" fill="#ffffff"/><rect x="1330" y="548" width="8" height="1" fill="#000"/><path fill="#a00000" d="M221 553h1v1h-1zM225 553h1v1h-1zM229 553h1v1h-1zM233 553h1v1h-1zM237 553h1v1h-1zM241 553h1v1h-1zM245 553h1v1h-1zM249 553h1v1h-1zM253 553h1v1h-1zM257 553h1v1h-1zM261 553h1v1h-1zM265 553h1v1h-1zM269 553h1v1h-1zM273 553h1v1h-1zM277 553h1v1h-1zM281 553h1v1h-1zM285 553h1v1h-1zM289 553h1v1h-1zM293 553h1v1h-1zM297 553h1v1h-1zM301 553h1v1h-1zM305 553h1v1h-1zM309 553h1v1h-1zM313 553h1v1h-1zM317 553h1v1h-1zM321 553h1v1h-1zM325 553h1v1h-1zM329 553h1v1h-1zM333 553h1v1h-1zM337 553h1v1h-1zM341 553h1v1h-1zM345 553h1v1h-1zM349 553h1v1h-1zM353 553h1v1h-1zM357 553h1v1h-1zM361 553h1v1h-1zM365 553h1v1h-1zM369 553h1v1h-1zM373 553h1v1h-1zM377 553h1v1h-1zM381 553h1v1h-1zM385 553h1v1h-1zM389 553h1v1h-1zM393 553h1v1h-1zM397 553h1v1h-1zM401 553h1v1h-1zM405 553h1v1h-1zM409 553h1v1h-1zM413 553h1v1h-1zM417 553h1v1h-1zM421 553h1v1h-1zM425 553h1v1h-1zM429 553h1v1h-1zM433 553h1v1h-1zM437 553h1v1h-1zM441 553h1v1h-1zM445 553h1v1h-1zM449 553h1v1h-1zM453 553h1v1h-1zM457 553h1v1h-1zM461 553h1v1h-1zM465 553h1v1h-1zM469 553h1v1h-1zM473 553h1v1h-1zM477 553h1v1h-1zM481 553h1v1h-1zM485 553h1v1h-1zM489 553h1v1h-1zM493 553h1v1h-1zM497 553h1v1h-1zM501 553h1v1h-1zM505 553h1v1h-1zM509 553h1v1h-1zM513 553h1v1h-1zM517 553h1v1h-1zM521 553h1v1h-1zM525 553h1v1h-1zM529 553h1v1h-1zM533 553h1v1h-1zM537 553h1v1h-1zM541 553h1v1h-1zM545 553h1v1h-1zM549 553h1v1h-1zM553 553h1v1h-1zM557 553h1v1h-1zM561 553h1v1h-1zM565 553h1v1h-1zM569 553h1v1h-1zM573 553h1v1h-1zM577 553h1v1h-1zM581 553h1v1h-1zM585 553h1v1h-1zM589 553h1v1h-1zM593 553h1v1h-1zM597 553h1v1h-1zM601 553h1v1h-1zM605 553h1v1h-1zM609 553h1v1h-1zM613 553h1v1h-1zM617 553h1v1h-1zM621 553h1v1h-1zM625 553h1v1h-1zM629 553h1v1h-1zM633 553h1v1h-1zM637 553h1v1h-1zM641 553h1v1h-1zM645 553h1v1h-1zM649 553h1v1h-1zM653 553h1v1h-1zM657 553h1v1h-1zM661 553h1v1h-1zM665 553h1v1h-1zM669 553h1v1h-1zM673 553h1v1h-1zM677 553h1v1h-1zM681 553h1v1h-1zM685 553h1v1h-1zM689 553h1v1h-1zM693 553h1v1h-1zM697 553h1v1h-1zM701 553h1v1h-1zM705 553h1v1h-1zM709 553h1v1h-1zM713 553h1v1h-1zM717 553h1v1h-1zM721 553h1v1h-1zM725 553h1v1h-1zM729 553h1v1h-1zM733 553h1v1h-1zM737 553h1v1h-1zM741 553h1v1h-1zM745 553h1v1h-1zM749 553h1v1h-1zM753 553h1v1h-1zM757 553h1v1h-1zM761 553h1v1h-1zM765 553h1v1h-1zM769 553h1v1h-1zM773 553h1v1h-1zM777 553h1v1h-1zM781 553h1v1h-1zM785 553h1v1h-1zM789 553h1v1h-1zM793 553h1v1h-1zM797 553h1v1h-1zM801 553h1v1h-1zM805 553h1v1h-1zM809 553h1v1h-1zM813 553h1v1h-1zM817 553h1v1h-1zM821 553h1v1h-1zM825 553h1v1h-1zM829 553h1v1h-1zM833 553h1v1h-1zM837 553h1v1h-1zM841 553h1v1h-1zM845 553h1v1h-1zM849 553h1v1h-1zM853 553h1v1h-1zM857 553h1v1h-1zM861 553h1v1h-1zM865 553h1v1h-1zM869 553h1v1h-1zM873 553h1v1h-1zM877 553h1v1h-1zM881 553h1v1h-1zM885 553h1v1h-1zM889 553h1v1h-1zM893 553h1v1h-1zM897 553h1v1h-1zM901 553h1v1h-1zM905 553h1v1h-1zM909 553h1v1h-1zM913 553h1v1h-1zM917 553h1v1h-1zM921 553h1v1h-1zM925 553h1v1h-1zM929 553h1v1h-1zM933 553h1v1h-1zM937 553h1v1h-1zM941 553h1v1h-1zM945 553h1v1h-1zM949 553h1v1h-1zM953 553h1v1h-1zM957 553h1v1h-1zM961 553h1v1h-1zM965 553h1v1h-1zM969 553h1v1h-1zM973 553h1v1h-1zM977 553h1v1h-1zM981 553h1v1h-1zM985 553h1v1h-1zM989 553h1v1h-1zM993 553h1v1h-1zM997 553h1v1h-1zM1001 553h1v1h-1zM1005 553h1v1h-1zM1009 553h1v1h-1zM1013 553h1v1h-1zM1017 553h1v1h-1zM1021 553h1v1h-1zM1025 553h1v1h-1zM1029 553h1v1h-1zM1033 553h1v1h-1zM1037 553h1v1h-1zM1041 553h1v1h-1zM1045 553h1v1h-1zM1049 553h1v1h-1zM1053 553h1v1h-1zM1057 553h1v1h-1zM1061 553h1v1h-1zM1065 553h1v1h-1zM1069 553h1v1h-1zM1073 553h1v1h-1zM1077 553h1v1h-1zM1081 553h1v1h-1zM1085 553h1v1h-1zM1089 553h1v1h-1zM1093 553h1v1h-1zM1097 553h1v1h-1zM1101 553h1v1h-1zM1105 553h1v1h-1zM1109 553h1v1h-1zM1113 553h1v1h-1zM1117 553h1v1h-1zM1121 553h1v1h-1zM1125 553h1v1h-1zM1129 553h1v1h-1zM1133 553h1v1h-1zM1137 553h1v1h-1zM1141 553h1v1h-1zM1145 553h1v1h-1zM1149 553h1v1h-1zM1153 553h1v1h-1zM1157 553h1v1h-1zM1161 553h1v1h-1zM1165 553h1v1h-1zM1169 553h1v1h-1zM1173 553h1v1h-1zM1177 553h1v1h-1zM1181 553h1v1h-1zM1185 553h1v1h-1zM1189 553h1v1h-1zM1193 553h1v1h-1zM1197 553h1v1h-1zM1201 553h1v1h-1zM1205 553h1v1h-1zM1209 553h1v1h-1zM1213 553h1v1h-1zM1217 553h1v1h-1zM1221 553h1v1h-1zM1225 553h1v1h-1zM1229 553h1v1h-1zM1233 553h1v1h-1zM1237 553h1v1h-1zM1241 553h1v1h-1zM1245 553h1v1h-1zM1249 553h1v1h-1zM1253 553h1v1h-1zM1257 553h1v1h-1zM1261 553h1v1h-1zM1265 553h1v1h-1zM1269 553h1v1h-1zM1273 553h1v1h-1zM1277 553h1v1h-1zM1281 553h1v1h-1zM1285 553h1v1h-1zM1289 553h1v1h-1zM1293 553h1v1h-1zM1297 553h1v1h-1zM1301 553h1v1h-1zM1305 553h1v1h-1zM1309 553h1v1h-1zM1313 553h1v1h-1zM1317 553h1v1h-1zM1321 553h1v1h-1zM1325 553h1v1h-1zM1329 553h1v1h-1zM1333 553h1v1h-1zM1337 553h1v1h-1zM1341 553h1v1h-1zM1345 553h1v1h-1zM1349 553h1v1h-1zM1353 553h1v1h-1zM1357 553h1v1h-1zM1361 553h1v1h-1zM1365 553h1v1h-1zM1369 553h1v1h-1zM1373 553h1v1h-1zM1377 553h1v1h-1zM1381 553h1v1h-1zM1385 553h1v1h-1zM1389 553h1v1h-1zM1393 553h1v1h-1zM1397 553h1v1h-1zM1401 553h1v1h-1zM1405 553h1v1h-1zM1409 553h1v1h-1zM1413 553h1v1h-1zM1417 553h1v1h-1zM1421 553h1v1h-1zM1425 553h1v1h-1zM1429 553h1v1h-1zM1433 553h1v1h-1zM1437 553h1v1h-1zM1441 553h1v1h-1zM1445 553h1v1h-1zM1449 553h1v1h-1zM1453 553h1v1h-1zM1457 553h1v1h-1zM1461 553h1v1h-1zM1465 553h1v1h-1zM1469 553h1v1h-1zM1473 553h1v1h-1zM1477 553h1v1h-1zM1481 553h1v1h-1zM1485 553h1v1h-1zM1489 553h1v1h-1zM1493 553h1v1h-1zM1497 553h1v1h-1zM1501 553h1v1h-1zM1505 553h1v1h-1zM1509 553h1v1h-1zM1513 553h1v1h-1zM1517 553h1v1h-1zM1521 553h1v1h-1zM1525 553h1v1h-1zM1529 553h1v1h-1zM1533 553h1v1h-1zM1537 553h1v1h-1zM1541 553h1v1h-1z"/><path fill="#a00000" d="M221 583h1v1h-1zM225 583h1v1h-1zM229 583h1v1h-1zM233 583h1v1h-1zM237 583h1v1h-1zM241 583h1v1h-1zM245 583h1v1h-1zM249 583h1v1h-1zM253 583h1v1h-1zM257 583h1v1h-1zM261 583h1v1h-1zM265 583h1v1h-1zM269 583h1v1h-1zM273 583h1v1h-1zM277 583h1v1h-1zM281 583h1v1h-1zM285 583h1v1h-1zM289 583h1v1h-1zM293 583h1v1h-1zM297 583h1v1h-1zM301 583h1v1h-1zM305 583h1v1h-1zM309 583h1v1h-1zM313 583h1v1h-1zM317 583h1v1h-1zM321 583h1v1h-1zM325 583h1v1h-1zM329 583h1v1h-1zM333 583h1v1h-1zM337 583h1v1h-1zM341 583h1v1h-1zM345 583h1v1h-1zM349 583h1v1h-1zM353 583h1v1h-1zM357 583h1v1h-1zM361 583h1v1h-1zM365 583h1v1h-1zM369 583h1v1h-1zM373 583h1v1h-1zM377 583h1v1h-1zM381 583h1v1h-1zM385 583h1v1h-1zM389 583h1v1h-1zM393 583h1v1h-1zM397 583h1v1h-1zM401 583h1v1h-1zM405 583h1v1h-1zM409 583h1v1h-1zM413 583h1v1h-1zM417 583h1v1h-1zM421 583h1v1h-1zM425 583h1v1h-1zM429 583h1v1h-1zM433 583h1v1h-1zM437 583h1v1h-1zM441 583h1v1h-1zM445 583h1v1h-1zM449 583h1v1h-1zM453 583h1v1h-1zM457 583h1v1h-1zM461 583h1v1h-1zM465 583h1v1h-1zM469 583h1v1h-1zM473 583h1v1h-1zM477 583h1v1h-1zM481 583h1v1h-1zM485 583h1v1h-1zM489 583h1v1h-1zM493 583h1v1h-1zM497 583h1v1h-1zM501 583h1v1h-1zM505 583h1v1h-1zM509 583h1v1h-1zM513 583h1v1h-1zM517 583h1v1h-1zM521 583h1v1h-1zM525 583h1v1h-1zM529 583h1v1h-1zM533 583h1v1h-1zM537 583h1v1h-1zM541 583h1v1h-1zM545 583h1v1h-1zM549 583h1v1h-1zM553 583h1v1h-1zM557 583h1v1h-1zM561 583h1v1h-1zM565 583h1v1h-1zM569 583h1v1h-1zM573 583h1v1h-1zM577 583h1v1h-1zM581 583h1v1h-1zM585 583h1v1h-1zM589 583h1v1h-1zM593 583h1v1h-1zM597 583h1v1h-1zM601 583h1v1h-1zM605 583h1v1h-1zM609 583h1v1h-1zM613 583h1v1h-1zM617 583h1v1h-1zM621 583h1v1h-1zM625 583h1v1h-1zM629 583h1v1h-1zM633 583h1v1h-1zM637 583h1v1h-1zM641 583h1v1h-1zM645 583h1v1h-1zM649 583h1v1h-1zM653 583h1v1h-1zM657 583h1v1h-1zM661 583h1v1h-1zM665 583h1v1h-1zM669 583h1v1h-1zM673 583h1v1h-1zM677 583h1v1h-1zM681 583h1v1h-1zM685 583h1v1h-1zM689 583h1v1h-1zM693 583h1v1h-1zM697 583h1v1h-1zM701 583h1v1h-1zM705 583h1v1h-1zM709 583h1v1h-1zM713 583h1v1h-1zM717 583h1v1h-1zM721 583h1v1h-1zM725 583h1v1h-1zM729 583h1v1h-1zM733 583h1v1h-1zM737 583h1v1h-1zM741 583h1v1h-1zM745 583h1v1h-1zM749 583h1v1h-1zM753 583h1v1h-1zM757 583h1v1h-1zM761 583h1v1h-1zM765 583h1v1h-1zM769 583h1v1h-1zM773 583h1v1h-1zM777 583h1v1h-1zM781 583h1v1h-1zM785 583h1v1h-1zM789 583h1v1h-1zM793 583h1v1h-1zM797 583h1v1h-1zM801 583h1v1h-1zM805 583h1v1h-1zM809 583h1v1h-1zM813 583h1v1h-1zM817 583h1v1h-1zM821 583h1v1h-1zM825 583h1v1h-1zM829 583h1v1h-1zM833 583h1v1h-1zM837 583h1v1h-1zM841 583h1v1h-1zM845 583h1v1h-1zM849 583h1v1h-1zM853 583h1v1h-1zM857 583h1v1h-1zM861 583h1v1h-1zM865 583h1v1h-1zM869 583h1v1h-1zM873 583h1v1h-1zM877 583h1v1h-1zM881 583h1v1h-1zM885 583h1v1h-1zM889 583h1v1h-1zM893 583h1v1h-1zM897 583h1v1h-1zM901 583h1v1h-1zM905 583h1v1h-1zM909 583h1v1h-1zM913 583h1v1h-1zM917 583h1v1h-1zM921 583h1v1h-1zM925 583h1v1h-1zM929 583h1v1h-1zM933 583h1v1h-1zM937 583h1v1h-1zM941 583h1v1h-1zM945 583h1v1h-1zM949 583h1v1h-1zM953 583h1v1h-1zM957 583h1v1h-1zM961 583h1v1h-1zM965 583h1v1h-1zM969 583h1v1h-1zM973 583h1v1h-1zM977 583h1v1h-1zM981 583h1v1h-1zM985 583h1v1h-1zM989 583h1v1h-1zM993 583h1v1h-1zM997 583h1v1h-1zM1001 583h1v1h-1zM1005 583h1v1h-1zM1009 583h1v1h-1zM1013 583h1v1h-1zM1017 583h1v1h-1zM1021 583h1v1h-1zM1025 583h1v1h-1zM1029 583h1v1h-1zM1033 583h1v1h-1zM1037 583h1v1h-1zM1041 583h1v1h-1zM1045 583h1v1h-1zM1049 583h1v1h-1zM1053 583h1v1h-1zM1057 583h1v1h-1zM1061 583h1v1h-1zM1065 583h1v1h-1zM1069 583h1v1h-1zM1073 583h1v1h-1zM1077 583h1v1h-1zM1081 583h1v1h-1zM1085 583h1v1h-1zM1089 583h1v1h-1zM1093 583h1v1h-1zM1097 583h1v1h-1zM1101 583h1v1h-1zM1105 583h1v1h-1zM1109 583h1v1h-1zM1113 583h1v1h-1zM1117 583h1v1h-1zM1121 583h1v1h-1zM1125 583h1v1h-1zM1129 583h1v1h-1zM1133 583h1v1h-1zM1137 583h1v1h-1zM1141 583h1v1h-1zM1145 583h1v1h-1zM1149 583h1v1h-1zM1153 583h1v1h-1zM1157 583h1v1h-1zM1161 583h1v1h-1zM1165 583h1v1h-1zM1169 583h1v1h-1zM1173 583h1v1h-1zM1177 583h1v1h-1zM1181 583h1v1h-1zM1185 583h1v1h-1zM1189 583h1v1h-1zM1193 583h1v1h-1zM1197 583h1v1h-1zM1201 583h1v1h-1zM1205 583h1v1h-1zM1209 583h1v1h-1zM1213 583h1v1h-1zM1217 583h1v1h-1zM1221 583h1v1h-1zM1225 583h1v1h-1zM1229 583h1v1h-1zM1233 583h1v1h-1zM1237 583h1v1h-1zM1241 583h1v1h-1zM1245 583h1v1h-1zM1249 583h1v1h-1zM1253 583h1v1h-1zM1257 583h1v1h-1zM1261 583h1v1h-1zM1265 583h1v1h-1zM1269 583h1v1h-1zM1273 583h1v1h-1zM1277 583h1v1h-1zM1281 583h1v1h-1zM1285 583h1v1h-1zM1289 583h1v1h-1zM1293 583h1v1h-1zM1297 583h1v1h-1zM1301 583h1v1h-1zM1305 583h1v1h-1zM1309 583h1v1h-1zM1313 583h1v1h-1zM1317 583h1v1h-1zM1321 583h1v1h-1zM1325 583h1v1h-1zM1329 583h1v1h-1zM1333 583h1v1h-1zM1337 583h1v1h-1zM1341 583h1v1h-1zM1345 583h1v1h-1zM1349 583h1v1h-1zM1353 583h1v1h-1zM1357 583h1v1h-1zM1361 583h1v1h-1zM1365 583h1v1h-1zM1369 583h1v1h-1zM1373 583h1v1h-1zM1377 583h1v1h-1zM1381 583h1v1h-1zM1385 583h1v1h-1zM1389 583h1v1h-1zM1393 583h1v1h-1zM1397 583h1v1h-1zM1401 583h1v1h-1zM1405 583h1v1h-1zM1409 583h1v1h-1zM1413 583h1v1h-1zM1417 583h1v1h-1zM1421 583h1v1h-1zM1425 583h1v1h-1zM1429 583h1v1h-1zM1433 583h1v1h-1zM1437 583h1v1h-1zM1441 583h1v1h-1zM1445 583h1v1h-1zM1449 583h1v1h-1zM1453 583h1v1h-1zM1457 583h1v1h-1zM1461 583h1v1h-1zM1465 583h1v1h-1zM1469 583h1v1h-1zM1473 583h1v1h-1zM1477 583h1v1h-1zM1481 583h1v1h-1zM1485 583h1v1h-1zM1489 583h1v1h-1zM1493 583h1v1h-1zM1497 583h1v1h-1zM1501 583h1v1h-1zM1505 583h1v1h-1zM1509 583h1v1h-1zM1513 583h1v1h-1zM1517 583h1v1h-1zM1521 583h1v1h-1zM1525 583h1v1h-1zM1529 583h1v1h-1zM1533 583h1v1h-1zM1537 583h1v1h-1zM1541 583h1v1h-1z"/><rect x="223" y="611" width="1319" height="1" fill="#ffff00"/><rect x="221" y="620" width="1321" height="1" fill="#c80000"/></svg><svg width="1542" height="728" style="position:absolute;left:0;top:0" shape-rendering="crispEdges"><path stroke="#ff3c3c" stroke-width="1" d="M224 670.0V670M229 669.5V670M328 669.1V670M334 666.6V670M339 666.1V670M344 664.9V670M349 663.5V670M355 662.3V670M360 660.9V670M365 660.9V670M370 661.3V670M376 663.5V670M381 664.5V670M386 665.7V670M391 666.9V670M396 667.8V670M402 668.5V670M407 666.3V670M412 661.9V670M417 661.5V670M423 660.3V670M428 660.7V670M433 664.9V670M438 667.3V670M444 668.7V670M449 669.0V670M496 668.8V670M533 669.4V670M538 669.4V670M543 669.7V670M575 668.9V670M580 668.3V670M585 667.9V670M590 668.0V670M596 668.8V670M627 669.9V670M632 668.8V670M637 668.8V670M643 669.0V670M648 668.4V670M653 667.7V670M658 669.5V670M679 668.9V670M685 665.6V670M690 663.1V670M695 657.9V670M700 653.9V670M706 651.5V670M711 650.6V670M716 653.2V670M721 655.1V670M726 651.9V670M732 653.1V670M737 655.5V670M742 658.9V670M747 663.1V670M753 668.9V670M857 667.3V670M863 665.0V670M868 663.1V670M873 660.8V670M878 660.2V670M884 657.8V670M889 654.7V670M894 654.1V670M899 655.1V670M905 655.7V670M910 656.3V670M915 656.7V670M920 658.5V670M926 661.5V670M931 662.8V670M936 663.9V670M941 665.1V670M946 665.6V670M952 668.1V670M1077 670.0V670M1083 669.9V670M1088 669.4V670M1093 668.3V670M1098 667.3V670M1104 668.3V670M1109 669.4V670M1114 663.6V670M1119 661.6V670M1125 661.7V670M1130 660.7V670M1135 661.0V670M1140 662.6V670M1146 663.9V670M1151 664.4V670M1156 666.9V670M1161 667.5V670M1166 667.7V670M1172 667.6V670M1177 666.3V670M1182 668.2V670M1187 669.0V670M1193 666.4V670M1198 666.0V670M1245 669.8V670M1324 668.8V670M1329 664.8V670M1334 667.4V670M1407 669.0V670M1413 667.7V670M1418 667.3V670M1423 667.3V670M1428 666.1V670M1434 663.6V670M1439 661.5V670M1444 660.9V670M1449 661.9V670M1455 662.5V670M1460 663.6V670M1465 664.8V670M1470 664.7V670M1476 664.9V670M1481 665.3V670M1486 666.6V670M1491 667.7V670M1496 667.9V670M1502 669.1V670" transform="translate(0.5,0)"/><path stroke="#00e6e6" stroke-width="1" d="M234 670V670.8M239 670V671.8M245 670V670.8M250 670V670.3M255 670V671.3M260 670V671.9M266 670V673.7M271 670V674.8M276 670V674.7M281 670V674.2M286 670V673.8M292 670V676.1M297 670V678.6M302 670V678.8M307 670V677.9M313 670V675.9M318 670V673.5M323 670V670.5M454 670V670.6M459 670V671.3M465 670V672.3M470 670V672.5M475 670V673.1M480 670V671.6M486 670V671.0M491 670V670.2M501 670V670.3M506 670V670.8M512 670V670.5M517 670V670.5M522 670V670.4M527 670V671.9M548 670V671.7M554 670V672.6M559 670V672.7M564 670V672.8M569 670V671.2M601 670V671.1M606 670V672.7M611 670V673.4M616 670V673.3M622 670V670.9M664 670V670.5M669 670V670.6M674 670V670.9M758 670V672.6M763 670V680.5M768 670V685.9M774 670V690.8M779 670V693.6M784 670V694.8M789 670V693.4M795 670V692.2M800 670V692.9M805 670V691.8M810 670V690.4M816 670V687.2M821 670V685.1M826 670V683.1M831 670V681.5M836 670V679.0M842 670V677.3M847 670V675.2M852 670V671.2M957 670V672.5M962 670V674.7M967 670V674.7M973 670V676.9M978 670V675.7M983 670V673.0M988 670V673.1M994 670V672.9M999 670V672.8M1004 670V673.6M1009 670V673.5M1015 670V674.8M1020 670V673.3M1025 670V671.8M1030 670V672.6M1036 670V675.7M1041 670V675.3M1046 670V675.2M1051 670V674.2M1056 670V673.6M1062 670V673.3M1067 670V672.6M1072 670V671.5M1203 670V670.3M1208 670V672.2M1214 670V671.5M1219 670V670.9M1224 670V671.3M1229 670V672.2M1235 670V671.1M1240 670V670.8M1250 670V671.1M1256 670V672.1M1261 670V672.4M1266 670V673.1M1271 670V674.1M1276 670V674.8M1282 670V675.0M1287 670V675.0M1292 670V675.3M1297 670V675.2M1303 670V675.4M1308 670V675.7M1313 670V674.3M1318 670V673.0M1339 670V672.1M1345 670V675.3M1350 670V678.6M1355 670V682.9M1360 670V684.3M1366 670V687.4M1371 670V688.8M1376 670V687.4M1381 670V684.1M1386 670V679.1M1392 670V675.3M1397 670V672.2M1402 670V670.7M1507 670V673.0M1512 670V675.6M1517 670V680.4M1523 670V682.8M1528 670V687.0M1533 670V694.4M1538 670V695.3" transform="translate(0.5,0)"/><polyline fill="none" stroke="#ffffff" stroke-width="1" points="223.6,670.0 228.8,669.7 234.1,670.5 239.3,671.3 244.6,670.9 249.8,670.6 255.0,671.4 260.3,672.0 265.5,673.5 270.7,674.8 276.0,675.5 281.2,675.8 286.5,676.0 291.7,678.2 296.9,680.9 302.2,682.2 307.4,682.8 312.6,682.5 317.9,681.7 323.1,680.0 328.4,679.1 333.6,677.3 338.8,676.4 344.1,675.0 349.3,673.3 354.6,671.5 359.8,669.4 365.0,668.1 370.3,667.2 375.5,667.5 380.7,667.2 386.0,667.3 391.2,667.6 396.5,667.8 401.7,668.0 406.9,666.2 412.2,662.5 417.4,661.2 422.7,659.1 427.9,658.0 433.1,659.7 438.4,660.6 443.6,661.2 448.8,661.3 454.1,662.2 459.3,662.8 464.6,663.7 469.8,664.2 475.0,664.9 480.3,664.4 485.5,664.1 490.7,663.7 496.0,662.8 501.2,663.6 506.5,664.0 511.7,663.9 516.9,664.0 522.2,664.0 527.4,665.1 532.7,663.6 537.9,663.5 543.1,663.7 548.4,665.0 553.6,665.9 558.8,666.4 564.1,666.8 569.3,666.1 574.6,664.6 579.8,664.0 585.0,663.5 590.3,663.3 595.5,663.6 600.8,665.0 606.0,666.3 611.2,667.1 616.5,667.6 621.7,666.3 626.9,665.7 632.2,665.0 637.4,664.8 642.7,664.8 647.9,664.2 653.1,663.5 658.4,664.4 663.6,665.0 668.8,665.2 674.1,665.5 679.3,664.2 684.6,661.7 689.8,659.3 695.0,654.7 700.3,650.2 705.5,646.2 710.8,643.0 716.0,642.1 721.2,641.0 726.5,636.7 731.7,635.0 736.9,634.3 742.2,634.6 747.4,636.0 752.7,639.2 757.9,641.6 763.1,647.6 768.4,652.8 773.6,658.5 778.8,663.5 784.1,667.6 789.3,670.1 794.6,672.6 799.8,676.2 805.0,678.7 810.3,680.7 815.5,681.4 820.8,682.3 826.0,683.1 831.2,683.8 836.5,683.6 841.7,683.7 846.9,683.3 852.2,681.1 857.4,678.5 862.7,676.5 867.9,674.5 873.1,671.9 878.4,670.2 883.6,667.1 888.9,663.2 894.1,660.6 899.3,659.1 904.6,657.4 909.8,655.8 915.0,654.1 920.3,653.5 925.5,654.0 930.8,653.7 936.0,653.5 941.2,653.5 946.5,653.1 951.7,654.3 956.9,657.1 962.2,659.0 967.4,659.7 972.7,661.9 977.9,662.0 983.1,660.9 988.4,661.4 993.6,661.7 998.9,662.1 1004.1,663.0 1009.3,663.5 1014.6,664.9 1019.8,664.5 1025.0,663.9 1030.3,664.7 1035.5,667.2 1040.8,667.8 1046.0,668.4 1051.2,668.5 1056.5,668.7 1061.7,669.0 1067.0,668.9 1072.2,668.5 1077.4,667.7 1082.7,667.6 1087.9,667.2 1093.1,666.4 1098.4,665.4 1103.6,665.8 1108.9,666.3 1114.1,662.1 1119.3,659.8 1124.6,658.7 1129.8,656.8 1135.0,655.7 1140.3,655.5 1145.5,655.4 1150.8,654.9 1156.0,655.9 1161.2,655.8 1166.5,655.6 1171.7,655.2 1177.0,654.0 1182.2,654.8 1187.4,655.1 1192.7,653.1 1197.9,652.4 1203.1,654.8 1208.4,656.2 1213.6,656.0 1218.9,655.8 1224.1,656.2 1229.3,657.0 1234.6,656.6 1239.8,656.5 1245.0,655.9 1250.3,656.8 1255.5,657.7 1260.8,658.2 1266.0,659.0 1271.2,660.2 1276.5,661.2 1281.7,662.0 1287.0,662.7 1292.2,663.7 1297.4,664.3 1302.7,665.2 1307.9,666.2 1313.1,666.0 1318.4,665.7 1323.6,663.1 1328.9,660.1 1334.1,661.2 1339.3,664.2 1344.6,666.8 1349.8,669.8 1355.1,674.1 1360.3,676.9 1365.5,681.1 1370.8,684.5 1376.0,686.2 1381.2,686.3 1386.5,684.8 1391.7,683.4 1397.0,681.9 1402.2,681.2 1407.4,680.1 1412.7,679.0 1417.9,678.5 1423.1,678.0 1428.4,676.8 1433.6,674.5 1438.9,672.1 1444.1,670.5 1449.3,669.9 1454.6,669.2 1459.8,668.9 1465.1,668.9 1470.3,668.0 1475.5,667.4 1480.8,667.0 1486.0,667.2 1491.2,667.5 1496.5,667.4 1501.7,667.9 1507.0,670.6 1512.2,672.8 1517.4,677.0 1522.7,680.1 1527.9,684.9 1533.1,692.5 1538.4,696.6"/><polyline fill="none" stroke="#ffff00" stroke-width="1" points="223.6,670.0 228.8,669.9 234.1,670.1 239.3,670.3 244.6,670.4 249.8,670.5 255.0,670.6 260.3,670.9 265.5,671.4 270.7,672.1 276.0,672.8 281.2,673.4 286.5,673.9 291.7,674.8 296.9,676.0 302.2,677.2 307.4,678.3 312.6,679.2 317.9,679.7 323.1,679.8 328.4,679.6 333.6,679.1 338.8,678.6 344.1,677.9 349.3,677.0 354.6,675.9 359.8,674.6 365.0,673.3 370.3,672.1 375.5,671.2 380.7,670.4 386.0,669.8 391.2,669.3 396.5,669.0 401.7,668.8 406.9,668.3 412.2,667.1 417.4,665.9 422.7,664.6 427.9,663.3 433.1,662.5 438.4,662.2 443.6,662.0 448.8,661.8 454.1,661.9 459.3,662.1 464.6,662.4 469.8,662.8 475.0,663.2 480.3,663.4 485.5,663.6 490.7,663.6 496.0,663.4 501.2,663.5 506.5,663.6 511.7,663.6 516.9,663.7 522.2,663.8 527.4,664.0 532.7,664.0 537.9,663.9 543.1,663.8 548.4,664.1 553.6,664.4 558.8,664.8 564.1,665.2 569.3,665.4 574.6,665.2 579.8,665.0 585.0,664.7 590.3,664.4 595.5,664.2 600.8,664.4 606.0,664.8 611.2,665.2 616.5,665.7 621.7,665.8 626.9,665.8 632.2,665.6 637.4,665.5 642.7,665.3 647.9,665.1 653.1,664.8 658.4,664.7 663.6,664.8 668.8,664.9 674.1,665.0 679.3,664.8 684.6,664.2 689.8,663.2 695.0,661.5 700.3,659.3 705.5,656.6 710.8,653.9 716.0,651.5 721.2,649.4 726.5,646.9 731.7,644.5 736.9,642.5 742.2,640.9 747.4,639.9 752.7,639.8 757.9,640.1 763.1,641.6 768.4,643.9 773.6,646.8 778.8,650.1 784.1,653.6 789.3,656.9 794.6,660.1 799.8,663.3 805.0,666.4 810.3,669.2 815.5,671.7 820.8,673.8 826.0,675.7 831.2,677.3 836.5,678.5 841.7,679.6 846.9,680.3 852.2,680.5 857.4,680.1 862.7,679.4 867.9,678.4 873.1,677.1 878.4,675.7 883.6,674.0 888.9,671.8 894.1,669.6 899.3,667.5 904.6,665.5 909.8,663.5 915.0,661.6 920.3,660.0 925.5,658.8 930.8,657.8 936.0,656.9 941.2,656.2 946.5,655.6 951.7,655.3 956.9,655.7 962.2,656.4 967.4,657.0 972.7,658.0 977.9,658.8 983.1,659.2 988.4,659.7 993.6,660.1 998.9,660.5 1004.1,661.0 1009.3,661.5 1014.6,662.2 1019.8,662.6 1025.0,662.9 1030.3,663.2 1035.5,664.0 1040.8,664.8 1046.0,665.5 1051.2,666.1 1056.5,666.6 1061.7,667.1 1067.0,667.5 1072.2,667.7 1077.4,667.7 1082.7,667.6 1087.9,667.6 1093.1,667.3 1098.4,666.9 1103.6,666.7 1108.9,666.6 1114.1,665.7 1119.3,664.5 1124.6,663.3 1129.8,662.0 1135.0,660.8 1140.3,659.7 1145.5,658.9 1150.8,658.1 1156.0,657.6 1161.2,657.3 1166.5,656.9 1171.7,656.6 1177.0,656.1 1182.2,655.8 1187.4,655.7 1192.7,655.2 1197.9,654.6 1203.1,654.6 1208.4,655.0 1213.6,655.2 1218.9,655.3 1224.1,655.5 1229.3,655.8 1234.6,655.9 1239.8,656.1 1245.0,656.0 1250.3,656.2 1255.5,656.5 1260.8,656.8 1266.0,657.3 1271.2,657.8 1276.5,658.5 1281.7,659.2 1287.0,659.9 1292.2,660.7 1297.4,661.4 1302.7,662.2 1307.9,663.0 1313.1,663.6 1318.4,664.0 1323.6,663.8 1328.9,663.1 1334.1,662.7 1339.3,663.0 1344.6,663.8 1349.8,665.0 1355.1,666.8 1360.3,668.8 1365.5,671.3 1370.8,673.9 1376.0,676.4 1381.2,678.4 1386.5,679.6 1391.7,680.4 1397.0,680.7 1402.2,680.8 1407.4,680.6 1412.7,680.3 1417.9,679.9 1423.1,679.6 1428.4,679.0 1433.6,678.1 1438.9,676.9 1444.1,675.6 1449.3,674.5 1454.6,673.4 1459.8,672.5 1465.1,671.8 1470.3,671.0 1475.5,670.3 1480.8,669.7 1486.0,669.2 1491.2,668.8 1496.5,668.6 1501.7,668.4 1507.0,668.9 1512.2,669.6 1517.4,671.1 1522.7,672.9 1527.9,675.3 1533.1,678.7 1538.4,682.3"/></svg><div class="mt" style="left:249.0px;top:89.0px;color:#e8e8e8"><span class="cj" style="left:0.0px">白</span><span class="cj" style="left:12.6px">银</span><span class="cj" style="left:25.2px">连</span><span class="cj" style="left:37.8px">续</span><span class="as" style="left:50.80px">(</span><span class="as" style="left:57.75px">1</span><span class="cj" style="left:64.3px">分</span><span class="as" style="left:77.30px">)</span><span class="as" style="left:91.20px">2</span><span class="as" style="left:98.15px">5</span><span class="as" style="left:105.10px">/</span><span class="as" style="left:112.05px">0</span><span class="as" style="left:119.00px">9</span><span class="as" style="left:125.95px">/</span><span class="as" style="left:132.90px">3</span><span class="as" style="left:139.85px">0</span><span class="as" style="left:153.75px">1</span><span class="as" style="left:160.70px">9</span><span class="as" style="left:167.65px">:</span><span class="as" style="left:174.60px">0</span><span class="as" style="left:181.55px">0</span><span class="as" style="left:188.50px">(</span><span class="as" style="left:195.45px">1</span><span class="as" style="left:202.40px">5</span><span class="as" style="left:209.35px">:</span><span class="as" style="left:216.30px">0</span><span class="as" style="left:223.25px">0</span><span class="as" style="left:230.20px">)</span><span class="cj" style="left:243.7px">开</span><span class="as" style="left:256.70px">1</span><span class="as" style="left:263.65px">0</span><span class="as" style="left:270.60px">9</span><span class="as" style="left:277.55px">1</span><span class="as" style="left:284.50px">4</span></div><svg class="abs" style="left:0;top:0" width="1542" height="728"><path fill="#e8e8e8" d="M546 84l-2.5 3.5h2v7.5h1v-7.5h2z"/></svg><div class="mt" style="left:553.6px;top:89.0px;color:#ff3232"><span class="cj" style="left:0.0px">高</span><span class="as" style="left:13.00px">1</span><span class="as" style="left:19.95px">0</span><span class="as" style="left:26.90px">9</span><span class="as" style="left:33.85px">2</span><span class="as" style="left:40.80px">0</span></div><svg class="abs" style="left:0;top:0" width="1542" height="728"><path fill="#ff3232" d="M607 95l-2.5 -3.5h2v-7.5h1v7.5h2z"/></svg><div class="mt" style="left:614.6px;top:89.0px;color:#00e6e6"><span class="cj" style="left:0.0px">低</span><span class="as" style="left:13.00px">1</span><span class="as" style="left:19.95px">0</span><span class="as" style="left:26.90px">9</span><span class="as" style="left:33.85px">1</span><span class="as" style="left:40.80px">2</span></div><svg class="abs" style="left:0;top:0" width="1542" height="728"><path fill="#00e6e6" d="M668 84l-2.5 3.5h2v7.5h1v-7.5h2z"/></svg><div class="mt" style="left:675.5px;top:89.0px;color:#ff3232"><span class="cj" style="left:0.0px">收</span><span class="as" style="left:13.00px">1</span><span class="as" style="left:19.95px">0</span><span class="as" style="left:26.90px">9</span><span class="as" style="left:33.85px">1</span><span class="as" style="left:40.80px">8</span></div><svg class="abs" style="left:0;top:0" width="1542" height="728"><path fill="#ff3232" d="M729 84l-2.5 3.5h2v7.5h1v-7.5h2z"/></svg><div class="mt" style="left:736.5px;top:89.0px;color:#e8e8e8"><span class="cj" style="left:0.0px">换</span><span class="as" style="left:13.00px">0</span><span class="as" style="left:19.95px">.</span><span class="as" style="left:26.90px">9</span><span class="as" style="left:33.85px">5</span><span class="as" style="left:40.80px">%</span></div><div class="mt" style="left:792.5px;top:89.0px;color:#ffff00"><span class="cj" style="left:0.0px">量</span><span class="as" style="left:13.00px">4</span><span class="as" style="left:19.95px">5</span><span class="as" style="left:26.90px">2</span><span class="as" style="left:33.85px">6</span></div><div class="mt" style="left:840.5px;top:89.0px;color:#ffff00"><span class="cj" style="left:0.0px">额</span><span class="as" style="left:13.00px">7</span><span class="as" style="left:19.95px">.</span><span class="as" style="left:26.90px">4</span><span class="cj" style="left:33.5px">亿</span></div><div class="mt" style="left:894.0px;top:89.0px;color:#ffff00"><span class="cj" style="left:0.0px">持</span><span class="as" style="left:13.00px">4</span><span class="as" style="left:19.95px">7</span><span class="as" style="left:26.90px">6</span><span class="as" style="left:33.85px">2</span><span class="as" style="left:40.80px">4</span><span class="as" style="left:47.75px">4</span></div><div class="mt" style="left:955.5px;top:89.0px;color:#e8e8e8"><span class="cj" style="left:0.0px">振</span><span class="as" style="left:13.00px">0</span><span class="as" style="left:19.95px">.</span><span class="as" style="left:26.90px">0</span><span class="as" style="left:33.85px">7</span><span class="as" style="left:40.80px">%</span></div><div class="mt" style="left:1010.5px;top:89.0px;color:#ff3232"><span class="cj" style="left:0.0px">涨</span><span class="as" style="left:13.00px">(</span><span class="as" style="left:19.95px">4</span><span class="as" style="left:26.90px">)</span><span class="as" style="left:33.85px">0</span><span class="as" style="left:40.80px">.</span><span class="as" style="left:47.75px">0</span><span class="as" style="left:54.70px">4</span><span class="as" style="left:61.65px">%</span></div><div class="mt" style="left:460.0px;top:105.0px;color:#ffff00"><span class="as" style="left:0.40px">:</span><span class="as" style="left:7.35px">-</span><span class="as" style="left:14.30px">1</span><span class="as" style="left:21.25px">8</span><span class="as" style="left:28.20px">.</span><span class="as" style="left:35.15px">2</span><span class="as" style="left:42.10px">8</span><span class="as" style="left:49.05px">9</span></div><svg class="abs" style="left:0;top:0" width="1542" height="728"><path fill="#ffff00" d="M522 111l-2.5 -3.5h2v-7.5h1v7.5h2z"/></svg><div class="mt" style="left:529.2px;top:105.0px;color:#ff00ff"><span class="as" style="left:0.40px">M</span><span class="as" style="left:7.35px">A</span><span class="as" style="left:14.30px">C</span><span class="as" style="left:21.25px">D</span><span class="as" style="left:28.20px">:</span><span class="as" style="left:35.15px">-</span><span class="as" style="left:42.10px">5</span><span class="as" style="left:49.05px">.</span><span class="as" style="left:56.00px">0</span><span class="as" style="left:62.95px">4</span><span class="as" style="left:69.90px">9</span></div><svg class="abs" style="left:0;top:0" width="1542" height="728"><path fill="#ff00ff" d="M612 100l-2.5 3.5h2v7.5h1v-7.5h2z"/></svg><div class="mt" style="left:619.2px;top:105.0px;color:#00dd00"><span class="as" style="left:0.40px">M</span><span class="as" style="left:7.35px">A</span><span class="as" style="left:14.30px">C</span><span class="as" style="left:21.25px">D</span><span class="as" style="left:28.20px">_</span><span class="as" style="left:35.15px">S</span><span class="as" style="left:42.10px">C</span><span class="as" style="left:49.05px">:</span><span class="as" style="left:56.00px">0</span></div><div class="mt" style="left:688.8px;top:105.0px;color:#1e90ff"><span class="as" style="left:0.40px">M</span><span class="as" style="left:7.35px">A</span><span class="as" style="left:14.30px">C</span><span class="as" style="left:21.25px">D</span><span class="as" style="left:28.20px">_</span><span class="as" style="left:35.15px">J</span><span class="as" style="left:42.10px">C</span><span class="as" style="left:49.05px">:</span><span class="as" style="left:56.00px">0</span></div><div class="mt" style="left:758.2px;top:105.0px;color:#ff5a28"><span class="as" style="left:0.40px">L</span><span class="as" style="left:7.35px">E</span><span class="as" style="left:14.30px">N</span><span class="as" style="left:21.25px">1</span><span class="as" style="left:28.20px">:</span><span class="as" style="left:35.15px">1</span><span class="as" style="left:42.10px">5</span></div><svg class="abs" style="left:0;top:0" width="1542" height="728"><path fill="#ff5a28" d="M813 100l-2.5 3.5h2v7.5h1v-7.5h2z"/></svg><div class="mt" style="left:820.5px;top:105.0px;color:#ff9a1e"><span class="as" style="left:0.40px">L</span><span class="as" style="left:7.35px">E</span><span class="as" style="left:14.30px">N</span><span class="as" style="left:21.25px">2</span><span class="as" style="left:28.20px">:</span><span class="as" style="left:35.15px">3</span><span class="as" style="left:42.10px">4</span></div><svg class="abs" style="left:0;top:0" width="1542" height="728"><path fill="#ff9a1e" d="M875 100l-2.5 3.5h2v7.5h1v-7.5h2z"/></svg><div class="mt" style="left:882.8px;top:105.0px;color:#a040ff"><span class="as" style="left:0.40px">A</span><span class="as" style="left:7.35px">1</span><span class="as" style="left:14.30px">:</span><span class="as" style="left:21.25px">-</span><span class="as" style="left:28.20px">1</span><span class="as" style="left:35.15px">5</span><span class="as" style="left:42.10px">1</span><span class="as" style="left:49.05px">.</span><span class="as" style="left:56.00px">1</span><span class="as" style="left:62.95px">7</span><span class="as" style="left:69.90px">7</span></div><svg class="abs" style="left:0;top:0" width="1542" height="728"><path fill="#a040ff" d="M966 111l-2.5 -3.5h2v-7.5h1v7.5h2z"/></svg><div class="mt" style="left:972.8px;top:105.0px;color:#10c040"><span class="as" style="left:0.40px">A</span><span class="as" style="left:7.35px">2</span><span class="as" style="left:14.30px">:</span><span class="as" style="left:21.25px">0</span></div><div class="mt" style="left:1007.5px;top:105.0px;color:#00a0a0"><span class="as" style="left:0.40px">A</span><span class="as" style="left:7.35px">1</span><span class="as" style="left:14.30px">_</span><span class="as" style="left:21.25px">1</span><span class="as" style="left:28.20px">:</span><span class="as" style="left:35.15px">-</span><span class="as" style="left:42.10px">6</span><span class="as" style="left:49.05px">5</span><span class="as" style="left:56.00px">.</span><span class="as" style="left:62.95px">1</span><span class="as" style="left:69.90px">7</span><span class="as" style="left:76.85px">7</span></div><div class="mt" style="left:1097.9px;top:105.0px;color:#ffa0ff"><span class="as" style="left:0.40px">A</span><span class="as" style="left:7.35px">2</span><span class="as" style="left:14.30px">_</span><span class="as" style="left:21.25px">1</span><span class="as" style="left:28.20px">:</span><span class="as" style="left:35.15px">4</span><span class="as" style="left:42.10px">3</span><span class="as" style="left:49.05px">.</span><span class="as" style="left:56.00px">6</span><span class="as" style="left:62.95px">1</span><span class="as" style="left:69.90px">7</span></div><div class="lb" style="left:276px;top:401px;font-size:10px">−1</div><div class="lb" style="left:276px;top:412px;font-size:10px">开空</div><div class="lb" style="left:292px;top:439px;font-size:10px">−1</div><div class="lb" style="left:293px;top:450px;font-size:10px">开空</div><div class="lb" style="left:287px;top:496px;font-size:10px">平空</div><div class="lb" style="left:313.5px;top:466.5px;font-size:10px">平空</div><div class="lb" style="left:313.5px;top:479px;font-size:10px">1</div><div class="lb" style="left:370px;top:452.6px;font-size:10px">开多</div><div class="lb" style="left:370.5px;top:463.6px;font-size:10px">1</div><div class="lb" style="left:403px;top:323px;font-size:10px">−1</div><div class="lb" style="left:403px;top:334.3px;font-size:10px">平多</div><div class="lb" style="left:424px;top:340.5px;font-size:10px">−1</div><div class="lb" style="left:424px;top:352.6px;font-size:10px">平多</div><div class="lb" style="left:407px;top:406.4px;font-size:10px">开多</div><div class="lb" style="left:408.1px;top:417.5px;font-size:10px">1</div><div class="lb" style="left:428px;top:442.7px;font-size:10px">开多</div><div class="lb" style="left:428.9px;top:453.8px;font-size:10px">1</div><div class="lb" style="left:484.8px;top:335.5px;font-size:10px">−1</div><div class="lb" style="left:484.8px;top:346.8px;font-size:10px">平多</div><div class="lb" style="left:721.5px;top:240.7px;font-size:10px">开多</div><div class="lb" style="left:720.5px;top:254.8px;font-size:10px">1</div><div class="lb" style="left:742px;top:202.8px;font-size:10px">−1</div><div class="lb" style="left:742px;top:213.8px;font-size:10px">平多</div><div class="lb" style="left:799.7px;top:313px;font-size:10px">−1</div><div class="lb" style="left:799.7px;top:324.6px;font-size:10px">开空</div><div class="lb" style="left:842.9px;top:373.6px;font-size:10px">平空</div><div class="lb" style="left:842.5px;top:385.4px;font-size:10px">1</div><div class="lb" style="left:1291.8px;top:156.6px;font-size:10px">−1</div><div class="lb" style="left:1291.8px;top:168.2px;font-size:10px">开空</div><div class="lb" style="left:1313.2px;top:191.4px;font-size:10px">平空</div><div class="lb" style="left:1313.9px;top:203.8px;font-size:10px">1</div><div class="lb" style="left:1381.4px;top:192.5px;font-size:10px">−1</div><div class="lb" style="left:1381.4px;top:204px;font-size:10px">开空</div><div class="lb" style="left:1428.8px;top:227.3px;font-size:10px">平空</div><div class="lb" style="left:1429.0px;top:239.7px;font-size:10px">1</div><div class="lb" style="left:1449.3px;top:237px;font-size:10px">开多</div><div class="lb" style="left:1449.5px;top:249.5px;font-size:10px">1</div><div class="lb" style="left:1496.6px;top:177.3px;font-size:10px">−1</div><div class="lb" style="left:1496.6px;top:188.9px;font-size:10px">平多</div><div class="mt" style="left:248.0px;top:491.6px;color:#e8e8e8"><span class="as" style="left:0.40px">1</span><span class="as" style="left:7.35px">0</span><span class="as" style="left:14.30px">8</span><span class="as" style="left:21.25px">8</span><span class="as" style="left:28.20px">1</span></div><div class="mt" style="left:1274.0px;top:127.9px;color:#e8e8e8"><span class="as" style="left:0.40px">1</span><span class="as" style="left:7.35px">1</span><span class="as" style="left:14.30px">0</span><span class="as" style="left:21.25px">2</span><span class="as" style="left:28.20px">8</span></div><div class="mt" style="left:224.5px;top:520.5px;color:#dd1c1c"><span class="as" style="left:0.40px">0</span><span class="as" style="left:7.35px">9</span><span class="as" style="left:14.30px">/</span><span class="as" style="left:21.25px">3</span><span class="as" style="left:28.20px">0</span></div><div class="mt" style="left:371.5px;top:520.5px;color:#dd1c1c"><span class="as" style="left:0.40px">0</span><span class="as" style="left:7.35px">6</span><span class="as" style="left:14.30px">:</span><span class="as" style="left:21.25px">2</span><span class="as" style="left:28.20px">4</span><span class="as" style="left:35.15px">(</span><span class="as" style="left:42.10px">0</span><span class="as" style="left:49.05px">2</span><span class="as" style="left:56.00px">:</span><span class="as" style="left:62.95px">2</span><span class="as" style="left:69.90px">4</span><span class="as" style="left:76.85px">)</span></div><div class="mt" style="left:574.5px;top:520.5px;color:#dd1c1c"><span class="as" style="left:0.40px">1</span><span class="as" style="left:7.35px">3</span><span class="as" style="left:14.30px">:</span><span class="as" style="left:21.25px">3</span><span class="as" style="left:28.20px">3</span><span class="as" style="left:35.15px">(</span><span class="as" style="left:42.10px">0</span><span class="as" style="left:49.05px">9</span><span class="as" style="left:56.00px">:</span><span class="as" style="left:62.95px">3</span><span class="as" style="left:69.90px">3</span><span class="as" style="left:76.85px">)</span></div><div class="mt" style="left:774.5px;top:520.5px;color:#dd1c1c"><span class="as" style="left:0.40px">1</span><span class="as" style="left:7.35px">4</span><span class="as" style="left:14.30px">:</span><span class="as" style="left:21.25px">1</span><span class="as" style="left:28.20px">1</span><span class="as" style="left:35.15px">(</span><span class="as" style="left:42.10px">1</span><span class="as" style="left:49.05px">0</span><span class="as" style="left:56.00px">:</span><span class="as" style="left:62.95px">1</span><span class="as" style="left:69.90px">1</span><span class="as" style="left:76.85px">)</span></div><div class="mt" style="left:977.5px;top:520.5px;color:#dd1c1c"><span class="as" style="left:0.40px">1</span><span class="as" style="left:7.35px">5</span><span class="as" style="left:14.30px">:</span><span class="as" style="left:21.25px">0</span><span class="as" style="left:28.20px">5</span><span class="as" style="left:35.15px">(</span><span class="as" style="left:42.10px">1</span><span class="as" style="left:49.05px">1</span><span class="as" style="left:56.00px">:</span><span class="as" style="left:62.95px">0</span><span class="as" style="left:69.90px">5</span><span class="as" style="left:76.85px">)</span></div><div class="mt" style="left:1177.5px;top:520.5px;color:#dd1c1c"><span class="as" style="left:0.40px">1</span><span class="as" style="left:7.35px">7</span><span class="as" style="left:14.30px">:</span><span class="as" style="left:21.25px">4</span><span class="as" style="left:28.20px">3</span><span class="as" style="left:35.15px">(</span><span class="as" style="left:42.10px">1</span><span class="as" style="left:49.05px">3</span><span class="as" style="left:56.00px">:</span><span class="as" style="left:62.95px">4</span><span class="as" style="left:69.90px">3</span><span class="as" style="left:76.85px">)</span></div><div class="mt" style="left:1376.5px;top:520.5px;color:#dd1c1c"><span class="as" style="left:0.40px">1</span><span class="as" style="left:7.35px">8</span><span class="as" style="left:14.30px">:</span><span class="as" style="left:21.25px">2</span><span class="as" style="left:28.20px">1</span><span class="as" style="left:35.15px">(</span><span class="as" style="left:42.10px">1</span><span class="as" style="left:49.05px">4</span><span class="as" style="left:56.00px">:</span><span class="as" style="left:62.95px">2</span><span class="as" style="left:69.90px">1</span><span class="as" style="left:76.85px">)</span></div><div class="mt" style="left:224.0px;top:539.0px;color:#ffffff"><span class="cj" style="left:0.0px">自</span><span class="cj" style="left:12.6px">制</span><span class="cj" style="left:25.2px">指</span><span class="cj" style="left:37.8px">标</span><span class="as" style="left:50.80px">t</span><span class="as" style="left:57.75px">e</span><span class="as" style="left:64.70px">s</span><span class="as" style="left:71.65px">t</span><span class="as" style="left:78.60px">(</span><span class="as" style="left:85.55px">1</span><span class="as" style="left:92.50px">0</span><span class="as" style="left:99.45px">,</span><span class="as" style="left:106.40px">2</span><span class="as" style="left:113.35px">0</span><span class="as" style="left:120.30px">,</span><span class="as" style="left:127.25px">2</span><span class="as" style="left:134.20px">0</span><span class="as" style="left:141.15px">)</span><span class="as" style="left:155.05px">M</span><span class="as" style="left:162.00px">A</span><span class="as" style="left:168.95px">1</span><span class="as" style="left:175.90px">:</span><span class="as" style="left:182.85px">1</span><span class="as" style="left:189.80px">0</span><span class="as" style="left:196.75px">9</span><span class="as" style="left:203.70px">1</span><span class="as" style="left:210.65px">4</span><span class="as" style="left:217.60px">.</span><span class="as" style="left:224.55px">1</span></div><svg class="abs" style="left:0;top:0" width="1542" height="728"><path fill="#ffffff" d="M461 545l-2.5 -3.5h2v-7.5h1v7.5h2z"/></svg><div class="mt" style="left:471.0px;top:539.0px;color:#ffff00"><span class="as" style="left:0.40px">A</span><span class="as" style="left:7.35px">1</span><span class="as" style="left:14.30px">:</span><span class="as" style="left:21.25px">5</span><span class="as" style="left:28.20px">0</span></div><div class="mt" style="left:223.0px;top:628.5px;color:#ffffff"><span class="as" style="left:0.40px">M</span><span class="as" style="left:7.35px">A</span><span class="as" style="left:14.30px">C</span><span class="as" style="left:21.25px">D</span><span class="as" style="left:28.20px">(</span><span class="as" style="left:35.15px">2</span><span class="as" style="left:42.10px">6</span><span class="as" style="left:49.05px">,</span><span class="as" style="left:56.00px">1</span><span class="as" style="left:62.95px">2</span><span class="as" style="left:69.90px">,</span><span class="as" style="left:76.85px">9</span><span class="as" style="left:83.80px">)</span><span class="as" style="left:97.70px">D</span><span class="as" style="left:104.65px">I</span><span class="as" style="left:111.60px">F</span><span class="as" style="left:118.55px">F</span><span class="as" style="left:125.50px">:</span><span class="as" style="left:132.45px">-</span><span class="as" style="left:139.40px">2</span><span class="as" style="left:146.35px">0</span><span class="as" style="left:153.30px">.</span><span class="as" style="left:160.25px">8</span><span class="as" style="left:167.20px">1</span><span class="as" style="left:174.15px">4</span></div><svg class="abs" style="left:0;top:0" width="1542" height="728"><path fill="#ffffff" d="M410 623.5l-2.5 3.5h2v7.5h1v-7.5h2z"/></svg><div class="mt" style="left:419.0px;top:628.5px;color:#ffff00"><span class="as" style="left:0.40px">D</span><span class="as" style="left:7.35px">E</span><span class="as" style="left:14.30px">A</span><span class="as" style="left:21.25px">:</span><span class="as" style="left:28.20px">-</span><span class="as" style="left:35.15px">1</span><span class="as" style="left:42.10px">8</span><span class="as" style="left:49.05px">.</span><span class="as" style="left:56.00px">2</span><span class="as" style="left:62.95px">8</span><span class="as" style="left:69.90px">9</span></div><svg class="abs" style="left:0;top:0" width="1542" height="728"><path fill="#ffff00" d="M502 634.5l-2.5 -3.5h2v-7.5h1v7.5h2z"/></svg><div class="mt" style="left:510.0px;top:628.5px;color:#ff00ff"><span class="as" style="left:0.40px">M</span><span class="as" style="left:7.35px">A</span><span class="as" style="left:14.30px">C</span><span class="as" style="left:21.25px">D</span><span class="as" style="left:28.20px">1</span><span class="as" style="left:35.15px">:</span><span class="as" style="left:42.10px">-</span><span class="as" style="left:49.05px">5</span><span class="as" style="left:56.00px">.</span><span class="as" style="left:62.95px">0</span><span class="as" style="left:69.90px">4</span><span class="as" style="left:76.85px">9</span></div><svg class="abs" style="left:0;top:0" width="1542" height="728"><path fill="#ff00ff" d="M600 623.5l-2.5 3.5h2v7.5h1v-7.5h2z"/></svg><svg class="abs" style="left:0;top:0" width="260" height="115"><rect x="222.5" y="82.5" width="25" height="12" rx="1.5" fill="#333" stroke="#c00000"/><path d="M238.5 83v11" stroke="#c00000"/><path d="M240.5 87.5h5l-2.5 3z" fill="#ff1010"/><path d="M231.5 101l4.5 4h-3v5.5h-3v-5.5h-3z" fill="#ff0000"/></svg><div class="abs" style="left:226px;top:81.5px;font-family:'Liberation Serif',serif;font-size:11px;color:#d0d0d0">K</div><div class="abs" style="left:1467px;top:83px;width:24px;height:14px;border:1px solid #8a8a8a;font-size:11px;line-height:12px;color:#9a9a9a;text-align:center">复权</div><div class="abs" style="left:1493px;top:83px;width:24px;height:14px;border:1px solid #8a8a8a;font-size:11px;line-height:12px;color:#9a9a9a;text-align:center">时段</div><div class="abs" style="left:1519px;top:83px;width:24px;height:14px;border:1px solid #8a8a8a;font-size:11px;line-height:12px;color:#9a9a9a;text-align:center">下载</div>
<div id="popup">
 <svg class="abs" style="left:4px;top:8px" width="10" height="10"><circle cx="4" cy="4" r="2.5" fill="#111"/></svg>
 <div class="pm" style="top:6px">蜡烛线(K)</div><div class="ps" style="top:6px">K</div>
 <div class="pm" style="top:28px">成交痕迹(O)</div><div class="ps" style="left:133px;top:28px">TRK</div>
 <div class="pm" style="top:50px">等量蜡烛线(V)</div><div class="ps" style="top:50px">VK</div>
 <div class="pm" style="top:72px">等价蜡烛线(D)</div><div class="ps" style="left:136px;top:72px">PK</div>
 <div class="abs" style="left:31px;top:94px;width:190px;height:1px;background:#d0d0d0"></div>
 <div class="pm" style="top:101px">美国线(B)</div><div class="ps" style="top:101px">BAR</div>
 <div class="pm" style="top:123px">价位线(P)</div><div class="ps" style="top:123px">PRICE</div>
 <div class="pm" style="top:145px">宝塔线(T)</div><div class="ps" style="top:145px">TOW</div>
 <div class="pm" style="top:167px">鬼变脸(G)</div><div class="ps" style="left:136px;top:167px">GBL</div>
</div>
</body></html>
